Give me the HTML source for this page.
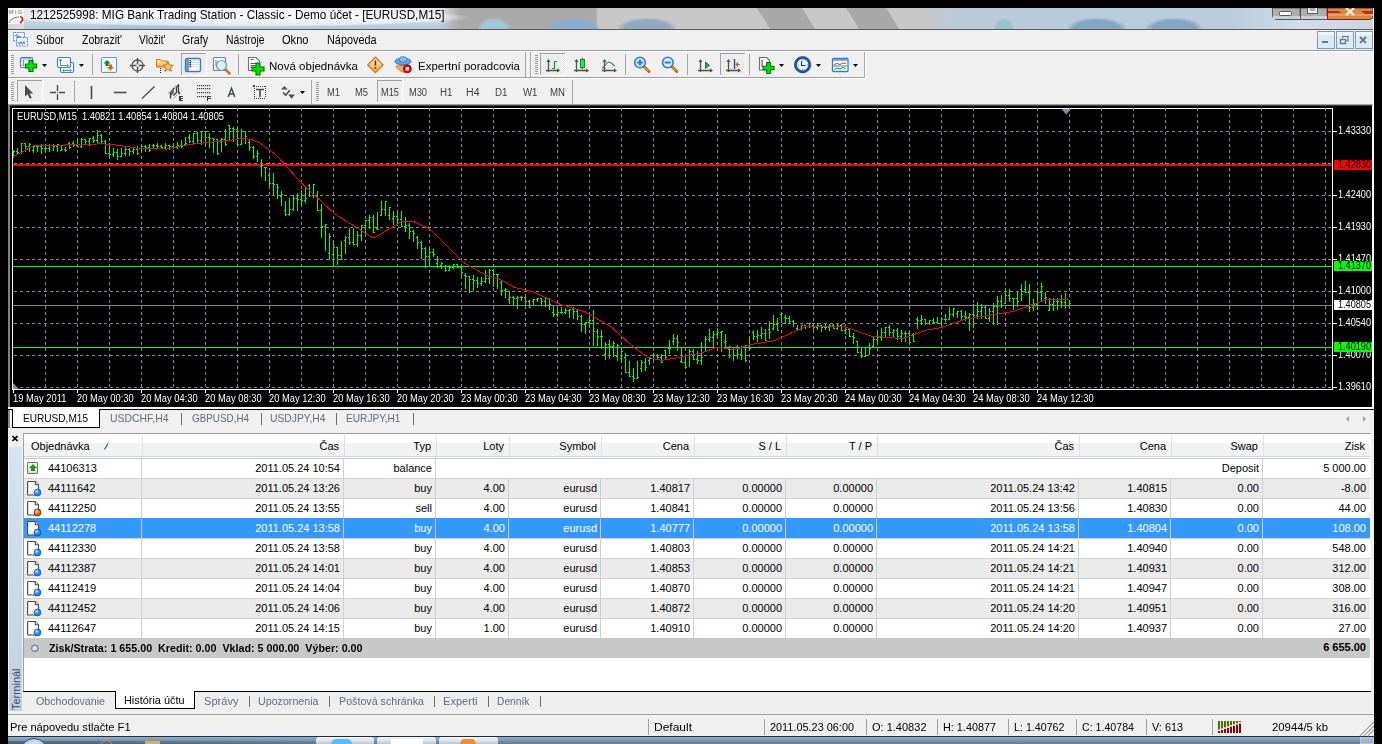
<!DOCTYPE html>
<html><head><meta charset="utf-8"><style>
html,body{margin:0;padding:0;width:1382px;height:744px;overflow:hidden;background:#000;font-family:"Liberation Sans", sans-serif;}
.r{position:absolute;}
.t{position:absolute;white-space:nowrap;font-family:"Liberation Sans", sans-serif;}
</style></head><body>
<div class="r" style="left:8px;top:8px;width:1366px;height:736px;background:#f0f0f0;"></div><div class="r" style="left:8px;top:8px;width:1366px;height:21px;background:linear-gradient(90deg,#d4dde6 0%,#d4dde6 31%,#aaaaaa 32.5%,#aaaaaa 43%,#c8c8c8 43.2%,#c8c8c8 100%);"></div><div class="r" style="left:8px;top:8px;width:452px;height:21px;background:linear-gradient(180deg,#e6eaee 0%,#e2e7ec 45%,#c2d2e2 70%,#b4c8dc 100%);-webkit-mask-image:linear-gradient(90deg,#000 0%,#000 94%,transparent 100%);mask-image:linear-gradient(90deg,#000 0%,#000 94%,transparent 100%);"></div><div class="r" style="left:745px;top:8px;width:60px;height:21px;background:#a9a9a9;transform:skewX(32deg);transform-origin:0 0;left:757px;width:45px;"></div><div class="r" style="left:846px;top:8px;width:40px;height:21px;background:#a9a9a9;transform:skewX(32deg);transform-origin:0 0;"></div><div class="r" style="left:905px;top:8px;width:469px;height:21px;background:linear-gradient(90deg,#c8c8c8 0%,#bccbd9 12%,#b9cbdc 30%,#bccddd 70%,#d2dde7 85%,#c9d7e3 100%);"></div><div class="r" style="left:894px;top:8px;width:30px;height:21px;background:#c8c8c8;transform:skewX(32deg);transform-origin:0 0;"></div><div class="r" style="left:478px;top:18px;width:32px;height:11px;background:radial-gradient(ellipse at 50% 100%,rgba(160,205,225,0.8) 0%,rgba(160,205,225,0.8) 55%,rgba(0,0,0,0) 75%);"></div><div class="r" style="left:548px;top:18px;width:52px;height:11px;background:radial-gradient(ellipse at 50% 100%,rgba(130,175,215,0.8) 0%,rgba(130,175,215,0.8) 55%,rgba(0,0,0,0) 75%);"></div><div class="r" style="left:618px;top:18px;width:58px;height:11px;background:radial-gradient(ellipse at 50% 100%,rgba(130,160,190,0.8) 0%,rgba(130,160,190,0.8) 55%,rgba(0,0,0,0) 75%);"></div><div class="r" style="left:100px;top:18px;width:130px;height:11px;background:radial-gradient(ellipse at 50% 100%,rgba(150,180,210,0.4) 0%,rgba(150,180,210,0.4) 55%,rgba(0,0,0,0) 75%);"></div><div class="r" style="left:1068px;top:18px;width:58px;height:11px;background:radial-gradient(ellipse at 50% 100%,rgba(110,150,180,0.7) 0%,rgba(110,150,180,0.7) 55%,rgba(0,0,0,0) 75%);"></div><div class="r" style="left:1146px;top:18px;width:56px;height:11px;background:radial-gradient(ellipse at 50% 100%,rgba(110,150,180,0.7) 0%,rgba(110,150,180,0.7) 55%,rgba(0,0,0,0) 75%);"></div><div class="r" style="left:994px;top:18px;width:20px;height:11px;background:radial-gradient(ellipse at 50% 100%,rgba(120,190,180,0.5) 0%,rgba(120,190,180,0.5) 55%,rgba(0,0,0,0) 75%);"></div><div class="r" style="left:10px;top:8px;width:462px;height:19px;background:radial-gradient(ellipse closest-side at 50% 50%,rgba(255,255,255,0.75) 0%,rgba(255,255,255,0.6) 85%,rgba(255,255,255,0) 100%);"></div><div class="t" style="left:29.5px;top:7.54px;font-size:13px;line-height:14.52px;color:#000;transform:scaleX(0.9034);transform-origin:0 0;">1212525998: MIG Bank Trading Station - Classic - Demo účet - [EURUSD,M15]</div><div class="r" style="left:8px;top:29px;width:1366px;height:1px;background:#5b5b5b;"></div><div class="r" style="left:8px;top:8px;width:16px;height:16px;background:#fbfbfb;"></div><div class="r" style="left:8px;top:24px;width:16px;height:5px;background:linear-gradient(90deg,#d4d4d4,#dcdcdc);"></div><svg class="r" style="left:8px;top:8px" width="17" height="16"><text x="0.5" y="6.3" font-family="Liberation Sans" font-size="6" letter-spacing="1.2" fill="#6a6a6a">MIG</text><path d="M1 15c2-4 6-6 10-6" stroke="#607080" stroke-width="1" fill="none"/><path d="M12 8.5c3 1 4 4 0 6.5" stroke="#ff1010" stroke-width="1.8" fill="none"/></svg><svg class="r" style="left:1271px;top:8px" width="103" height="13"><path d="M1.5 0V7.5a4 4 0 0 0 4 4H29V0z" fill="#aeaeae" stroke="#585858" stroke-width="1"/><rect x="2" y="8" width="27" height="3" fill="#c4d0dc"/><path d="M29.5 0V11.5H56V0z" fill="#aeaeae" stroke="#585858" stroke-width="1"/><rect x="30" y="8" width="26" height="3" fill="#c4d0dc"/><path d="M56.5 0V11.5H98a4 4 0 0 0 4-4V0z" fill="#d98a3c" stroke="#8a1a20" stroke-width="1"/><path d="M57 3h10l4 2h-14zM90 3h12v3h-8z" fill="#b03030"/><rect x="57" y="6" width="45" height="2" fill="#eaa050"/><rect x="8.5" y="3.5" width="12" height="4" rx="1" fill="#fafafa" stroke="#505860" stroke-width="1"/><path d="M36.5 0V5.5H46.5V0" fill="#fafafa" stroke="#505860" stroke-width="1"/><rect x="38.5" y="0" width="6" height="3" fill="#aeaeae"/><path d="M75 0l4 3.5 4-3.5M75 7l4-3.5 4 3.5" stroke="#f4f4f4" stroke-width="2.2" fill="none"/></svg><div class="r" style="left:8px;top:30px;width:1366px;height:20px;background:#f0f0f0;"></div><div class="r" style="left:8px;top:50px;width:1366px;height:1px;background:#a0a0a0;"></div><div class="r" style="left:8px;top:51px;width:1366px;height:1px;background:#ffffff;"></div><svg class="r" style="left:12px;top:31px" width="17" height="17"><rect x="1.5" y="1.5" width="11" height="8.5" fill="#f4f8ff" stroke="#2f7cf0" stroke-width="1" stroke-dasharray="1 0.6"/><rect x="4.5" y="6.5" width="11" height="8.5" fill="#f4f8ff" stroke="#2f7cf0" stroke-width="1" stroke-dasharray="1 0.6"/><path d="M3 5l2-1.5v3l2-1.5 2 1.5M6 11l1.5 2.5 1.5-3 1.5 3 1.5-3 1 2.5" stroke="#2f7cf0" stroke-width="1" fill="none"/></svg><div class="r" style="left:1317px;top:31px;width:18px;height:18px;box-sizing:border-box;border:1px solid #8898a8;background:linear-gradient(180deg,#eef5fc 0%,#eef5fc 20%,#dce9f7 21%,#dce9f7 100%)"></div><div class="r" style="left:1336px;top:31px;width:18px;height:18px;box-sizing:border-box;border:1px solid #8898a8;background:linear-gradient(180deg,#eef5fc 0%,#eef5fc 20%,#dce9f7 21%,#dce9f7 100%)"></div><div class="r" style="left:1355px;top:31px;width:18px;height:18px;box-sizing:border-box;border:1px solid #8898a8;background:linear-gradient(180deg,#eef5fc 0%,#eef5fc 20%,#dce9f7 21%,#dce9f7 100%)"></div><svg class="r" style="left:1317px;top:31px" width="56" height="18"><rect x="5" y="10" width="6" height="2" fill="#6a7886"/><rect x="23.5" y="8.5" width="5" height="4" fill="none" stroke="#6a7886" stroke-width="1.4"/><path d="M25.5 7V5.5h5.5v4.5h-1.5" fill="none" stroke="#6a7886" stroke-width="1.2"/><path d="M43 6l6 6M49 6l-6 6" stroke="#6a7886" stroke-width="1.8"/></svg><div class="t" style="left:36px;top:33.54px;font-size:12px;line-height:13.40px;color:#000;transform:scaleX(0.8744);transform-origin:0 0;">Súbor</div><div class="t" style="left:82px;top:33.54px;font-size:12px;line-height:13.40px;color:#000;transform:scaleX(0.8764);transform-origin:0 0;">Zobrazit&#x27;</div><div class="t" style="left:139px;top:33.54px;font-size:12px;line-height:13.40px;color:#000;transform:scaleX(0.8377);transform-origin:0 0;">Vložit&#x27;</div><div class="t" style="left:182px;top:33.54px;font-size:12px;line-height:13.40px;color:#000;transform:scaleX(0.8862);transform-origin:0 0;">Grafy</div><div class="t" style="left:226px;top:33.54px;font-size:12px;line-height:13.40px;color:#000;transform:scaleX(0.8616);transform-origin:0 0;">Nástroje</div><div class="t" style="left:282px;top:33.54px;font-size:12px;line-height:13.40px;color:#000;transform:scaleX(0.9239);transform-origin:0 0;">Okno</div><div class="t" style="left:327px;top:33.54px;font-size:12px;line-height:13.40px;color:#000;transform:scaleX(0.9048);transform-origin:0 0;">Nápoveda</div><div class="r" style="left:8px;top:77px;width:857px;height:1px;background:#a0a0a0;"></div><div class="r" style="left:8px;top:78px;width:858px;height:1px;background:#ffffff;"></div><div class="r" style="left:865px;top:52px;width:1px;height:26px;background:#ffffff;"></div><svg class="r" style="left:0;top:0" width="1382" height="110" viewBox="0 0 1382 110"><defs><pattern id="chk" width="2" height="2" patternUnits="userSpaceOnUse"><rect width="2" height="2" fill="#f6f6f6"/><rect width="1" height="1" fill="#e4e4e4"/><rect x="1" y="1" width="1" height="1" fill="#e4e4e4"/></pattern><linearGradient id="gw" x1="0" y1="0" x2="0" y2="1"><stop offset="0" stop-color="#fff"/><stop offset="1" stop-color="#e8eef6"/></linearGradient><linearGradient id="gorange" x1="0" y1="0" x2="0" y2="1"><stop offset="0" stop-color="#fff4c0"/><stop offset="1" stop-color="#f5a040"/></linearGradient><radialGradient id="gclock" cx="0.4" cy="0.35" r="0.7"><stop offset="0" stop-color="#ffffff"/><stop offset="1" stop-color="#dfe8f0"/></radialGradient></defs><rect x="11" y="55" width="3" height="1" fill="#9a9a9a"/><rect x="11" y="57" width="3" height="1" fill="#9a9a9a"/><rect x="11" y="59" width="3" height="1" fill="#9a9a9a"/><rect x="11" y="61" width="3" height="1" fill="#9a9a9a"/><rect x="11" y="63" width="3" height="1" fill="#9a9a9a"/><rect x="11" y="65" width="3" height="1" fill="#9a9a9a"/><rect x="11" y="67" width="3" height="1" fill="#9a9a9a"/><rect x="11" y="69" width="3" height="1" fill="#9a9a9a"/><rect x="11" y="71" width="3" height="1" fill="#9a9a9a"/><rect x="11" y="73" width="3" height="1" fill="#9a9a9a"/><rect x="20.5" y="57.5" width="12" height="10" rx="1.5" fill="#fff" stroke="#3c7fd0" stroke-width="1.2"/><rect x="21" y="58" width="11" height="1.5" fill="#8fbbe8"/><path d="M23.5 60v6M22 61.5l1.5-1.5 1.5 1.5M22 64.5l1.5 1.5 1.5-1.5" stroke="#7a95b0" stroke-width="1" fill="none"/><path d="M29.0 60.5h4v3.5h3.5v4h-3.5v3.5h-4v-3.5h-3.5v-4h3.5z" fill="#00e800" stroke="#007000" stroke-width="1.1"/><path d="M42 64h5l-2.5 3z" fill="#000"/><rect x="60.5" y="62.5" width="13" height="10" rx="1.5" fill="#fff" stroke="#3c7fd0" stroke-width="1.2"/><rect x="57.5" y="57.5" width="13" height="10" rx="1.5" fill="#fff" stroke="#3c7fd0" stroke-width="1.2"/><path d="M60.5 59.5v6M60.5 65.5h8M63 70.5h8" stroke="#6a88a8" stroke-width="1" fill="none"/><path d="M59 61l1.5-2 1.5 2M66.5 64l2 1.5-2 1.5M64.5 69l-2 1.5 2 1.5M69.5 69l2 1.5-2 1.5" stroke="#6a88a8" stroke-width="1" fill="none"/><path d="M79 64h5l-2.5 3z" fill="#000"/><rect x="92" y="54" width="1" height="21" fill="#a8a8a8"/><rect x="101.5" y="57.5" width="15" height="15" rx="1.5" fill="#fff" stroke="#5b9bd5" stroke-width="1.2"/><path d="M104 62h10M104 65h10M104 68h10M104 71h10" stroke="#d8d8d8" stroke-width="1"/><path d="M107 60l-3.5 3.5h2v2.5h3v-2.5h2z" fill="#0a8a20"/><path d="M110.5 70.5l3.5-3.5h-2v-2.5h-3v2.5h-2z" fill="#d06a10"/><circle cx="137.5" cy="65.5" r="5.5" fill="none" stroke="#505050" stroke-width="1.3"/><path d="M137.5 58v15M130 65.5h15" stroke="#505050" stroke-width="1.5"/><circle cx="137.5" cy="65.5" r="1.3" fill="#f0f0f0"/><path d="M156.5 59.5h4l1 1.5h5.5v6h-10.5z" fill="url(#gorange)" stroke="#c87820" stroke-width="1"/><path d="M168 61.5l1.6 3.4 3.6.4-2.7 2.4.8 3.6-3.3-1.9-3.3 1.9.8-3.6-2.7-2.4 3.6-.4z" fill="#f8c060" stroke="#c87018" stroke-width="1"/><path d="M160.5 68v1M160.5 70v1M160.5 72v1" stroke="#222" stroke-width="1"/><rect x="181" y="53" width="25" height="22" fill="url(#chk)"/><rect x="181" y="53" width="25" height="1" fill="#a0a0a0"/><rect x="181" y="53" width="1" height="22" fill="#a0a0a0"/><rect x="181" y="75" width="26" height="1" fill="#ffffff"/><rect x="206" y="53" width="1" height="22" fill="#ffffff"/><rect x="185.5" y="58.5" width="15" height="13" rx="1.5" fill="#fff" stroke="#3a7bd0" stroke-width="1.4"/><rect x="186" y="59" width="3" height="12" fill="#5d9ad8"/><path d="M190 60.5h10M190 62.5h10M190 64.5h10M190 66.5h10" stroke="#c8dcf0" stroke-width="1"/><rect x="189.5" y="60" width="1.5" height="1.5" fill="#e00"/><rect x="189.5" y="62" width="1.5" height="1.5" fill="#024"/><rect x="189.5" y="64" width="1.5" height="1.5" fill="#024"/><rect x="189.5" y="66" width="1.5" height="1.5" fill="#e00"/><rect x="213.5" y="57.5" width="12" height="13" rx="1" fill="#fff" stroke="#808080" stroke-width="1.2"/><path d="M216 60v6M222 60v6" stroke="#8a6a6a" stroke-width="1"/><line x1="225" y1="69" x2="229.5" y2="73.5" stroke="#c07818" stroke-width="2.5" stroke-linecap="round"/><circle cx="221.5" cy="65.5" r="5" fill="#e6f2fc" fill-opacity="0.9" stroke="#5a9ae0" stroke-width="1.2"/><rect x="238" y="54" width="1" height="21" fill="#a8a8a8"/><path d="M248.5 57.5h7.5l3.5 3.5v9.5h-11z" fill="#fff" stroke="#6a7480" stroke-width="1.1"/><path d="M250.5 59.5h3M250.5 63.5h6M250.5 65.5h5M250.5 67.5h3" stroke="#50607a" stroke-width="1"/><path d="M256.0 63.0h4v4.0h4.0v4h-4.0v4.0h-4v-4.0h-4.0v-4h4.0z" fill="#00e800" stroke="#007000" stroke-width="1.1"/><path d="M375.4 57.2l7.6 7.7-7.6 7.7-7.6-7.7z" fill="url(#gorange)" stroke="#d07414" stroke-width="1.3"/><path d="M375.4 60.5v5" stroke="#802000" stroke-width="1.6"/><rect x="374.6" y="67" width="1.6" height="1.6" fill="#802000"/><path d="M396 66c1 3 5 6 10 7l4-4-1-4z" fill="#f5a850" stroke="#c87020" stroke-width="0.8"/><ellipse cx="403" cy="61.5" rx="8" ry="3.3" fill="#60a8e0" stroke="#2a74c0" stroke-width="1"/><ellipse cx="403" cy="59.5" rx="4" ry="2.8" fill="#80c0f0" stroke="#2a74c0" stroke-width="0.8"/><circle cx="407.3" cy="68.8" r="4" fill="#ee0000" stroke="#900" stroke-width="0.8"/><rect x="405.6" y="67.1" width="3.4" height="3.4" fill="#fff"/><rect x="525" y="52" width="1" height="25" fill="#a8a8a8"/><rect x="530" y="52" width="1" height="25" fill="#a8a8a8"/><rect x="535" y="55" width="3" height="1" fill="#9a9a9a"/><rect x="535" y="57" width="3" height="1" fill="#9a9a9a"/><rect x="535" y="59" width="3" height="1" fill="#9a9a9a"/><rect x="535" y="61" width="3" height="1" fill="#9a9a9a"/><rect x="535" y="63" width="3" height="1" fill="#9a9a9a"/><rect x="535" y="65" width="3" height="1" fill="#9a9a9a"/><rect x="535" y="67" width="3" height="1" fill="#9a9a9a"/><rect x="535" y="69" width="3" height="1" fill="#9a9a9a"/><rect x="535" y="71" width="3" height="1" fill="#9a9a9a"/><rect x="535" y="73" width="3" height="1" fill="#9a9a9a"/><rect x="540" y="53" width="25" height="22" fill="url(#chk)"/><rect x="540" y="53" width="25" height="1" fill="#a0a0a0"/><rect x="540" y="53" width="1" height="22" fill="#a0a0a0"/><rect x="540" y="75" width="26" height="1" fill="#ffffff"/><rect x="565" y="53" width="1" height="22" fill="#ffffff"/><path d="M548.5 60V72M546 70.5H559" stroke="#505050" stroke-width="1.3" fill="none"/><path d="M548.5 59l-2 3h4z" fill="#505050"/><path d="M560 70.5l-3 -2v4z" fill="#505050"/><path d="M554.5 61v8M552 68.5h2.5M554.5 61.5h2.5" stroke="#0a9a20" stroke-width="1.2" fill="none"/><path d="M576.5 60V72M574 70.5H588" stroke="#505050" stroke-width="1.3" fill="none"/><path d="M576.5 59l-2 3h4z" fill="#505050"/><path d="M589 70.5l-3 -2v4z" fill="#505050"/><path d="M582.5 57.5v12" stroke="#0a8a20" stroke-width="1"/><rect x="580.5" y="59.5" width="4" height="8" fill="#20ee30" stroke="#0a8a20" stroke-width="1"/><path d="M604.5 60V72M602 70.5H616" stroke="#505050" stroke-width="1.3" fill="none"/><path d="M604.5 59l-2 3h4z" fill="#505050"/><path d="M617 70.5l-3 -2v4z" fill="#505050"/><path d="M602.5 68.5c2-3 4-6 6.5-6.5 2 0 4 3 6 4" stroke="#208a30" stroke-width="1.2" fill="none"/><rect x="625" y="54" width="1" height="21" fill="#a8a8a8"/><line x1="643.5" y1="66.0" x2="649" y2="71.5" stroke="#b86d10" stroke-width="3" stroke-linecap="round"/><line x1="644.5" y1="67.0" x2="648.5" y2="71.0" stroke="#f0b040" stroke-width="1"/><circle cx="640" cy="62.5" r="5.3" fill="#d8ecfb" stroke="#2f7ad0" stroke-width="1.6"/><path d="M637 62.5h6M640 59.5v6" stroke="#2f7ad0" stroke-width="2"/><line x1="671.3" y1="66.0" x2="676.8" y2="71.5" stroke="#b86d10" stroke-width="3" stroke-linecap="round"/><line x1="672.3" y1="67.0" x2="676.3" y2="71.0" stroke="#f0b040" stroke-width="1"/><circle cx="667.8" cy="62.5" r="5.3" fill="#d8ecfb" stroke="#2f7ad0" stroke-width="1.6"/><path d="M664.8 62.5h6" stroke="#2f7ad0" stroke-width="2"/><rect x="687" y="54" width="1" height="21" fill="#a8a8a8"/><path d="M700.5 60V72M698 70.5H712" stroke="#505050" stroke-width="1.3" fill="none"/><path d="M700.5 59l-2 3h4z" fill="#505050"/><path d="M713 70.5l-3 -2v4z" fill="#505050"/><path d="M705.5 62v6.5l4-3.2z" fill="#20b030" stroke="#0a8a20" stroke-width="1"/><rect x="720" y="53" width="25" height="22" fill="url(#chk)"/><rect x="720" y="53" width="25" height="1" fill="#a0a0a0"/><rect x="720" y="53" width="1" height="22" fill="#a0a0a0"/><rect x="720" y="75" width="26" height="1" fill="#ffffff"/><rect x="745" y="53" width="1" height="22" fill="#ffffff"/><path d="M728.5 60V72M726 70.5H740" stroke="#505050" stroke-width="1.3" fill="none"/><path d="M728.5 59l-2 3h4z" fill="#505050"/><path d="M741 70.5l-3 -2v4z" fill="#505050"/><path d="M734.5 59v10" stroke="#1a5ab0" stroke-width="1.4"/><path d="M736 64.5h4M738 62.5l-2 2 2 2" stroke="#d06010" stroke-width="1.2" fill="none"/><rect x="749" y="54" width="1" height="21" fill="#a8a8a8"/><path d="M759.5 57.5h7l3 3v9.5h-10z" fill="#fff" stroke="#707070" stroke-width="1.1"/><path d="M762 60v7" stroke="#702070" stroke-width="1"/><path d="M766.7 62.5h3.6v3.7h3.7v3.6h-3.7v3.7h-3.6v-3.7h-3.7v-3.6h3.7z" fill="#00e800" stroke="#007000" stroke-width="1.1"/><path d="M779 64h5l-2.5 3z" fill="#000"/><circle cx="802.6" cy="64.7" r="7" fill="url(#gclock)" stroke="#1d56b8" stroke-width="2.6"/><circle cx="802.6" cy="64.7" r="8.2" fill="none" stroke="#0d2f80" stroke-width="0.6"/><path d="M802.6 59.5v1M802.6 69v1M797.5 64.7h1M806.8 64.7h1" stroke="#607080" stroke-width="0.8"/><path d="M801.5 61v4.5h4" stroke="#303030" stroke-width="1.2" fill="none"/><path d="M816 64h5l-2.5 3z" fill="#000"/><rect x="832.5" y="58.5" width="15.5" height="13" rx="1" fill="#fff" stroke="#3a7bd0" stroke-width="1.3"/><rect x="833" y="59" width="14.5" height="1.8" fill="#6aa0e0"/><path d="M834 64.5l3-1 3 1 3-1.5 3 .5" stroke="#b05010" stroke-width="1" fill="none"/><path d="M833 66h14" stroke="#3a7bd0" stroke-width="1"/><path d="M834 69.5l3-1.5 3 1 3-1.5 3 1" stroke="#20a030" stroke-width="1" fill="none"/><path d="M853 64h5l-2.5 3z" fill="#000"/><rect x="864" y="52" width="1" height="25" fill="#a8a8a8"/><rect x="11" y="82" width="3" height="1" fill="#9a9a9a"/><rect x="11" y="84" width="3" height="1" fill="#9a9a9a"/><rect x="11" y="86" width="3" height="1" fill="#9a9a9a"/><rect x="11" y="88" width="3" height="1" fill="#9a9a9a"/><rect x="11" y="90" width="3" height="1" fill="#9a9a9a"/><rect x="11" y="92" width="3" height="1" fill="#9a9a9a"/><rect x="11" y="94" width="3" height="1" fill="#9a9a9a"/><rect x="11" y="96" width="3" height="1" fill="#9a9a9a"/><rect x="11" y="98" width="3" height="1" fill="#9a9a9a"/><rect x="11" y="100" width="3" height="1" fill="#9a9a9a"/><rect x="17" y="80" width="25" height="22" fill="url(#chk)"/><rect x="17" y="80" width="25" height="1" fill="#a0a0a0"/><rect x="17" y="80" width="1" height="22" fill="#a0a0a0"/><rect x="17" y="102" width="26" height="1" fill="#ffffff"/><rect x="42" y="80" width="1" height="22" fill="#ffffff"/><path d="M25 85v11.5l2.6-2.3 2.2 4.6 2-1-2.2-4.4h3.6z" fill="#4a4a4a"/><path d="M50 92.5h6M59 92.5h6M57.5 85v6M57.5 94v6" stroke="#4a4a4a" stroke-width="1.4"/><rect x="57" y="92" width="1" height="1" fill="#c03030"/><rect x="74" y="81" width="1" height="21" fill="#a8a8a8"/><path d="M91.5 86v13" stroke="#4a4a4a" stroke-width="1.6"/><path d="M114 92.5h12.5" stroke="#4a4a4a" stroke-width="1.6"/><path d="M142 98.5l12.5-12" stroke="#4a4a4a" stroke-width="1.2"/><path d="M168 93.5L176 86M173.5 98.5L182 90.5" stroke="#5a7890" stroke-width="1" stroke-dasharray="1 1" fill="none"/><path d="M170.5 98.5V92.5L172 91M170 95.5l3-2.5V89.5l1.5-1.5M173.5 95.5l3-3V87l2.5-2.5M178.5 84v8.5l1.5 1.5" stroke="#3a3a3a" stroke-width="1.3" fill="none"/><path d="M179.5 96.5h3.5M179.5 98.5h3M179.5 100.5h3.5M180 96v5" stroke="#3a3a3a" stroke-width="1.1" fill="none" shape-rendering="crispEdges"/><rect x="197" y="85" width="1.2" height="1.2" fill="#3a3a3a"/><rect x="199" y="85" width="1.2" height="1.2" fill="#3a3a3a"/><rect x="201" y="85" width="1.2" height="1.2" fill="#3a3a3a"/><rect x="203" y="85" width="1.2" height="1.2" fill="#3a3a3a"/><rect x="205" y="85" width="1.2" height="1.2" fill="#3a3a3a"/><rect x="207" y="85" width="1.2" height="1.2" fill="#3a3a3a"/><rect x="209" y="85" width="1.2" height="1.2" fill="#3a3a3a"/><rect x="197" y="88" width="1.2" height="1.2" fill="#3a3a3a"/><rect x="199" y="88" width="1.2" height="1.2" fill="#3a3a3a"/><rect x="201" y="88" width="1.2" height="1.2" fill="#3a3a3a"/><rect x="203" y="88" width="1.2" height="1.2" fill="#3a3a3a"/><rect x="205" y="88" width="1.2" height="1.2" fill="#3a3a3a"/><rect x="207" y="88" width="1.2" height="1.2" fill="#3a3a3a"/><rect x="209" y="88" width="1.2" height="1.2" fill="#3a3a3a"/><rect x="197" y="92" width="1.2" height="1.2" fill="#3a3a3a"/><rect x="199" y="92" width="1.2" height="1.2" fill="#3a3a3a"/><rect x="201" y="92" width="1.2" height="1.2" fill="#3a3a3a"/><rect x="203" y="92" width="1.2" height="1.2" fill="#3a3a3a"/><rect x="205" y="92" width="1.2" height="1.2" fill="#3a3a3a"/><rect x="207" y="92" width="1.2" height="1.2" fill="#3a3a3a"/><rect x="209" y="92" width="1.2" height="1.2" fill="#3a3a3a"/><rect x="197" y="96" width="1.2" height="1.2" fill="#3a3a3a"/><rect x="199" y="96" width="1.2" height="1.2" fill="#3a3a3a"/><rect x="201" y="96" width="1.2" height="1.2" fill="#3a3a3a"/><rect x="203" y="96" width="1.2" height="1.2" fill="#3a3a3a"/><rect x="205" y="96" width="1.2" height="1.2" fill="#3a3a3a"/><path d="M207.5 96.5h3.5M207.5 98.5h3M207.5 96v5" stroke="#3a3a3a" stroke-width="1.2" fill="none" shape-rendering="crispEdges"/><path d="M228.2 97L231.5 88.3 234.8 97M229.6 94h3.8" stroke="#404850" stroke-width="1.4" fill="none"/><rect x="254" y="86" width="1" height="1" fill="#3a3a3a"/><rect x="254" y="98" width="1" height="1" fill="#3a3a3a"/><rect x="256" y="86" width="1" height="1" fill="#3a3a3a"/><rect x="256" y="98" width="1" height="1" fill="#3a3a3a"/><rect x="258" y="86" width="1" height="1" fill="#3a3a3a"/><rect x="258" y="98" width="1" height="1" fill="#3a3a3a"/><rect x="260" y="86" width="1" height="1" fill="#3a3a3a"/><rect x="260" y="98" width="1" height="1" fill="#3a3a3a"/><rect x="262" y="86" width="1" height="1" fill="#3a3a3a"/><rect x="262" y="98" width="1" height="1" fill="#3a3a3a"/><rect x="264" y="86" width="1" height="1" fill="#3a3a3a"/><rect x="264" y="98" width="1" height="1" fill="#3a3a3a"/><rect x="254" y="86" width="1" height="1" fill="#3a3a3a"/><rect x="265" y="86" width="1" height="1" fill="#3a3a3a"/><rect x="254" y="88" width="1" height="1" fill="#3a3a3a"/><rect x="265" y="88" width="1" height="1" fill="#3a3a3a"/><rect x="254" y="90" width="1" height="1" fill="#3a3a3a"/><rect x="265" y="90" width="1" height="1" fill="#3a3a3a"/><rect x="254" y="92" width="1" height="1" fill="#3a3a3a"/><rect x="265" y="92" width="1" height="1" fill="#3a3a3a"/><rect x="254" y="94" width="1" height="1" fill="#3a3a3a"/><rect x="265" y="94" width="1" height="1" fill="#3a3a3a"/><rect x="254" y="96" width="1" height="1" fill="#3a3a3a"/><rect x="265" y="96" width="1" height="1" fill="#3a3a3a"/><rect x="253" y="85" width="2" height="2" fill="#3a3a3a"/><path d="M256 89.5h8M260 89.5v7.5" stroke="#505050" stroke-width="1.7" fill="none"/><path d="M281 89.5l3.4-3.5 3.4 3.5z M288.2 94.5h6.8l-3.4 4.3z" fill="#505050"/><path d="M283 92.5l2.7 2.8 4-5" stroke="#404040" stroke-width="1.4" fill="none"/><path d="M300 91h5l-2.5 3z" fill="#000"/><rect x="311" y="80" width="1" height="24" fill="#a8a8a8"/><rect x="316" y="82" width="3" height="1" fill="#9a9a9a"/><rect x="316" y="84" width="3" height="1" fill="#9a9a9a"/><rect x="316" y="86" width="3" height="1" fill="#9a9a9a"/><rect x="316" y="88" width="3" height="1" fill="#9a9a9a"/><rect x="316" y="90" width="3" height="1" fill="#9a9a9a"/><rect x="316" y="92" width="3" height="1" fill="#9a9a9a"/><rect x="316" y="94" width="3" height="1" fill="#9a9a9a"/><rect x="316" y="96" width="3" height="1" fill="#9a9a9a"/><rect x="316" y="98" width="3" height="1" fill="#9a9a9a"/><rect x="316" y="100" width="3" height="1" fill="#9a9a9a"/><rect x="377" y="80" width="25" height="22" fill="url(#chk)"/><rect x="377" y="80" width="25" height="1" fill="#a0a0a0"/><rect x="377" y="80" width="1" height="22" fill="#a0a0a0"/><rect x="377" y="102" width="26" height="1" fill="#ffffff"/><rect x="402" y="80" width="1" height="22" fill="#ffffff"/><rect x="572" y="80" width="1" height="24" fill="#a8a8a8"/></svg><div class="t" style="left:269px;top:59.59px;font-size:11.5px;line-height:12.85px;color:#000;transform:scaleX(1.0015);transform-origin:0 0;">Nová objednávka</div><div class="t" style="left:418px;top:59.59px;font-size:11.5px;line-height:12.85px;color:#000;transform:scaleX(0.9972);transform-origin:0 0;">Expertní poradcovia</div><div class="t" style="left:326.5px;top:86.95px;font-size:10px;line-height:11.17px;color:#404040;transform:scaleX(0.9358);transform-origin:0 0;">M1</div><div class="t" style="left:354.5px;top:86.95px;font-size:10px;line-height:11.17px;color:#404040;transform:scaleX(0.9358);transform-origin:0 0;">M5</div><div class="t" style="left:380.5px;top:86.95px;font-size:10px;line-height:11.17px;color:#404040;transform:scaleX(0.9253);transform-origin:0 0;">M15</div><div class="t" style="left:408.5px;top:86.95px;font-size:10px;line-height:11.17px;color:#404040;transform:scaleX(0.9253);transform-origin:0 0;">M30</div><div class="t" style="left:439.5px;top:86.95px;font-size:10px;line-height:11.17px;color:#404040;transform:scaleX(0.9778);transform-origin:0 0;">H1</div><div class="t" style="left:466px;top:86.95px;font-size:10px;line-height:11.17px;color:#404040;transform:scaleX(1.0561);transform-origin:0 0;">H4</div><div class="t" style="left:495px;top:86.95px;font-size:10px;line-height:11.17px;color:#404040;transform:scaleX(0.9778);transform-origin:0 0;">D1</div><div class="t" style="left:523px;top:86.95px;font-size:10px;line-height:11.17px;color:#404040;transform:scaleX(0.9667);transform-origin:0 0;">W1</div><div class="t" style="left:549.5px;top:86.95px;font-size:10px;line-height:11.17px;color:#404040;transform:scaleX(0.9645);transform-origin:0 0;">MN</div><div class="r" style="left:8px;top:104px;width:1366px;height:304px;background:#000;"></div><div class="r" style="left:8px;top:104px;width:1366px;height:1px;background:#a0a0a0;"></div><div class="r" style="left:8px;top:105px;width:1366px;height:1px;background:#404040;"></div><div class="r" style="left:8px;top:105px;width:2px;height:302px;background:#808080;"></div><div class="r" style="left:1372px;top:105px;width:1px;height:302px;background:#ffffff;"></div><div class="r" style="left:1373px;top:8px;width:1px;height:736px;background:#ffffff;"></div><div class="r" style="left:12px;top:108px;width:1321px;height:1px;background:#fff;"></div><div class="r" style="left:12px;top:108px;width:1px;height:282px;background:#fff;"></div><div class="r" style="left:1332px;top:108px;width:1px;height:282px;background:#fff;"></div><div class="r" style="left:12px;top:389px;width:1321px;height:1px;background:#fff;"></div><svg class="r" style="left:0;top:0" width="1382" height="744" viewBox="0 0 1382 744"><path d="M45.5 108V389 M77.5 108V389 M109.5 108V389 M141.5 108V389 M173.5 108V389 M205.5 108V389 M237.5 108V389 M269.5 108V389 M301.5 108V389 M333.5 108V389 M365.5 108V389 M397.5 108V389 M429.5 108V389 M461.5 108V389 M493.5 108V389 M525.5 108V389 M557.5 108V389 M589.5 108V389 M621.5 108V389 M653.5 108V389 M685.5 108V389 M717.5 108V389 M749.5 108V389 M781.5 108V389 M813.5 108V389 M845.5 108V389 M877.5 108V389 M909.5 108V389 M941.5 108V389 M973.5 108V389 M1005.5 108V389 M1037.5 108V389 M1069.5 108V389 M1101.5 108V389 M1133.5 108V389 M1165.5 108V389 M1197.5 108V389 M1229.5 108V389 M1261.5 108V389 M1293.5 108V389 M1325.5 108V389 M14 131.5H1332 M14 163.5H1332 M14 195.5H1332 M14 227.5H1332 M14 259.5H1332 M14 291.5H1332 M14 323.5H1332 M14 355.5H1332 M14 387.5H1332" stroke="#7d8ea0" stroke-width="1" stroke-dasharray="3 3" fill="none"/><rect x="13" y="164" width="1319" height="2" fill="#ff0000"/><rect x="13" y="266" width="1319" height="1" fill="#00ff00"/><rect x="13" y="347" width="1319" height="1" fill="#00ff00"/><rect x="13" y="305" width="1319" height="1" fill="#778899"/><path d="M13.5 150V158M12 150.5h1M14 151.5h1M17.5 148V154M16 151.5h1M18 152.5h1M21.5 143V154M20 152.5h1M22 143.5h1M25.5 143V152M24 143.5h1M26 146.5h1M29.5 143V152M28 146.5h1M30 144.5h1M33.5 146V153M32 150.5h1M34 146.5h1M37.5 145V152M36 146.5h1M38 146.5h1M41.5 144V154M40 146.5h1M42 148.5h1M45.5 144V152M44 148.5h1M46 148.5h1M49.5 144V152M48 148.5h1M50 145.5h1M53.5 144V151M52 145.5h1M54 146.5h1M57.5 144V152M56 146.5h1M58 144.5h1M61.5 146V151M60 150.5h1M62 149.5h1M65.5 147V152M64 149.5h1M66 150.5h1M69.5 142V149M68 143.5h1M70 147.5h1M73.5 141V147M72 143.5h1M74 145.5h1M77.5 139V147M76 145.5h1M78 146.5h1M81.5 138V148M80 146.5h1M82 139.5h1M85.5 139V145M84 139.5h1M86 141.5h1M89.5 138V146M88 141.5h1M90 138.5h1M93.5 136V143M92 138.5h1M94 140.5h1M97.5 130V144M96 140.5h1M98 135.5h1M101.5 134V144M100 135.5h1M102 141.5h1M105.5 140V154M104 141.5h1M106 153.5h1M109.5 143V157M108 153.5h1M110 154.5h1M113.5 148V157M112 154.5h1M114 152.5h1M117.5 149V160M116 152.5h1M118 156.5h1M121.5 148V157M120 156.5h1M122 153.5h1M125.5 147V156M124 153.5h1M126 149.5h1M129.5 148V156M128 149.5h1M130 151.5h1M133.5 148V154M132 151.5h1M134 149.5h1M137.5 146V155M136 149.5h1M138 153.5h1M141.5 144V152M140 148.5h1M142 146.5h1M145.5 145V152M144 146.5h1M146 147.5h1M149.5 144V152M148 147.5h1M150 150.5h1M153.5 144V148M152 145.5h1M154 145.5h1M157.5 143V149M156 145.5h1M158 146.5h1M161.5 145V149M160 146.5h1M162 147.5h1M165.5 143V150M164 147.5h1M166 145.5h1M169.5 145V150M168 145.5h1M170 146.5h1M173.5 143V149M172 146.5h1M174 147.5h1M177.5 142V149M176 147.5h1M178 145.5h1M181.5 140V148M180 145.5h1M182 146.5h1M185.5 137V145M184 144.5h1M186 143.5h1M189.5 134V143M188 137.5h1M190 141.5h1M193.5 133V144M192 141.5h1M194 133.5h1M197.5 132V144M196 133.5h1M198 140.5h1M201.5 131V145M200 140.5h1M202 131.5h1M205.5 131V145M204 131.5h1M206 137.5h1M209.5 133V148M208 137.5h1M210 138.5h1M213.5 138V153M212 138.5h1M214 139.5h1M217.5 139V155M216 139.5h1M218 153.5h1M221.5 138V152M220 140.5h1M222 139.5h1M225.5 129V146M224 139.5h1M226 144.5h1M229.5 125V140M228 125.5h1M230 128.5h1M233.5 127V142M232 128.5h1M234 129.5h1M237.5 128V145M236 129.5h1M238 144.5h1M241.5 129V145M240 144.5h1M242 131.5h1M245.5 131V144M244 131.5h1M246 136.5h1M249.5 139V151M248 142.5h1M250 147.5h1M253.5 146V159M252 147.5h1M254 156.5h1M257.5 150V162M256 156.5h1M258 153.5h1M261.5 159V177M260 166.5h1M262 165.5h1M265.5 167V181M264 167.5h1M266 167.5h1M269.5 172V187M268 175.5h1M270 183.5h1M273.5 173V195M272 183.5h1M274 184.5h1M277.5 184V199M276 184.5h1M278 187.5h1M281.5 191V206M280 196.5h1M282 194.5h1M285.5 201V216M284 210.5h1M286 214.5h1M289.5 198V216M288 214.5h1M290 209.5h1M293.5 195V211M292 209.5h1M294 198.5h1M297.5 193V211M296 198.5h1M298 199.5h1M301.5 190V206M300 199.5h1M302 200.5h1M305.5 186V203M304 200.5h1M306 198.5h1M309.5 184V197M308 185.5h1M310 195.5h1M313.5 184V198M312 195.5h1M314 184.5h1M317.5 191V211M316 195.5h1M318 210.5h1M321.5 204V238M320 210.5h1M322 226.5h1M325.5 224V251M324 226.5h1M326 224.5h1M329.5 233V260M328 253.5h1M330 236.5h1M333.5 241V267M332 254.5h1M334 247.5h1M337.5 247V265M336 247.5h1M338 255.5h1M341.5 241V260M340 255.5h1M342 259.5h1M345.5 236V254M344 240.5h1M346 237.5h1M349.5 228V245M348 237.5h1M350 242.5h1M353.5 228V245M352 242.5h1M354 244.5h1M357.5 231V247M356 244.5h1M358 235.5h1M361.5 225V241M360 235.5h1M362 225.5h1M365.5 220V236M364 225.5h1M366 220.5h1M369.5 215V229M368 220.5h1M370 217.5h1M373.5 215V233M372 217.5h1M374 232.5h1M377.5 212V230M376 228.5h1M378 229.5h1M381.5 201V216M380 215.5h1M382 209.5h1M385.5 201V216M384 209.5h1M386 201.5h1M389.5 207V220M388 215.5h1M390 207.5h1M393.5 211V225M392 218.5h1M394 216.5h1M397.5 211V226M396 216.5h1M398 219.5h1M401.5 211V227M400 219.5h1M402 226.5h1M405.5 217V232M404 226.5h1M406 225.5h1M409.5 223V239M408 225.5h1M410 231.5h1M413.5 230V242M412 231.5h1M414 233.5h1M417.5 236V249M416 237.5h1M418 242.5h1M421.5 241V259M420 242.5h1M422 248.5h1M425.5 247V268M424 248.5h1M426 256.5h1M429.5 248V264M428 256.5h1M430 252.5h1M433.5 249V257M432 252.5h1M434 254.5h1M437.5 256V268M436 263.5h1M438 259.5h1M441.5 262V269M440 265.5h1M442 263.5h1M445.5 265V272M444 266.5h1M446 270.5h1M449.5 265V271M448 270.5h1M450 267.5h1M453.5 264V269M452 267.5h1M454 264.5h1M457.5 264V268M456 264.5h1M458 267.5h1M461.5 267V276M460 267.5h1M462 272.5h1M465.5 273V289M464 275.5h1M466 276.5h1M469.5 276V293M468 276.5h1M470 279.5h1M473.5 275V291M472 279.5h1M474 280.5h1M477.5 277V288M476 280.5h1M478 283.5h1M481.5 277V286M480 283.5h1M482 281.5h1M485.5 270V283M484 281.5h1M486 278.5h1M489.5 269V284M488 278.5h1M490 270.5h1M493.5 269V287M492 270.5h1M494 274.5h1M497.5 274V289M496 274.5h1M498 274.5h1M501.5 281V296M500 282.5h1M502 290.5h1M505.5 288V298M504 290.5h1M506 289.5h1M509.5 291V304M508 299.5h1M510 297.5h1M513.5 296V306M512 297.5h1M514 298.5h1M517.5 296V309M516 298.5h1M518 297.5h1M521.5 296V301M520 297.5h1M522 297.5h1M525.5 297V306M524 297.5h1M526 301.5h1M529.5 300V308M528 301.5h1M530 307.5h1M533.5 299V305M532 301.5h1M534 299.5h1M537.5 298V302M536 299.5h1M538 298.5h1M541.5 298V306M540 298.5h1M542 301.5h1M545.5 298V307M544 301.5h1M546 305.5h1M549.5 298V310M548 305.5h1M550 304.5h1M553.5 306V317M552 312.5h1M554 314.5h1M557.5 309V317M556 314.5h1M558 312.5h1M561.5 307V314M560 312.5h1M562 312.5h1M565.5 308V314M564 312.5h1M566 310.5h1M569.5 309V318M568 310.5h1M570 309.5h1M573.5 307V319M572 309.5h1M574 311.5h1M577.5 310V320M576 311.5h1M578 316.5h1M581.5 315V332M580 316.5h1M582 324.5h1M585.5 322V334M584 324.5h1M586 322.5h1M589.5 313V328M588 322.5h1M590 320.5h1M593.5 310V346M592 320.5h1M594 331.5h1M597.5 329V346M596 331.5h1M598 336.5h1M601.5 330V349M600 336.5h1M602 336.5h1M605.5 342V360M604 354.5h1M606 344.5h1M609.5 340V359M608 344.5h1M610 346.5h1M613.5 341V357M612 346.5h1M614 343.5h1M617.5 344V361M616 356.5h1M618 345.5h1M621.5 348V362M620 358.5h1M622 351.5h1M625.5 353V373M624 357.5h1M626 372.5h1M629.5 361V377M628 372.5h1M630 376.5h1M633.5 368V382M632 376.5h1M634 378.5h1M637.5 361V379M636 378.5h1M638 377.5h1M641.5 360V372M640 368.5h1M642 362.5h1M645.5 358V371M644 362.5h1M646 367.5h1M649.5 357V365M648 360.5h1M650 358.5h1M653.5 353V360M652 358.5h1M654 355.5h1M657.5 354V360M656 355.5h1M658 357.5h1M661.5 354V363M660 357.5h1M662 362.5h1M665.5 350V359M664 350.5h1M666 357.5h1M669.5 340V354M668 348.5h1M670 348.5h1M673.5 334V345M672 341.5h1M674 338.5h1M677.5 335V351M676 338.5h1M678 342.5h1M681.5 347V363M680 361.5h1M682 362.5h1M685.5 357V369M684 362.5h1M686 367.5h1M689.5 349V367M688 355.5h1M690 351.5h1M693.5 349V360M692 351.5h1M694 359.5h1M697.5 351V364M696 359.5h1M698 360.5h1M701.5 342V365M700 360.5h1M702 357.5h1M705.5 336V351M704 347.5h1M706 339.5h1M709.5 329V342M708 339.5h1M710 337.5h1M713.5 331V347M712 337.5h1M714 334.5h1M717.5 328V339M716 334.5h1M718 332.5h1M721.5 331V352M720 332.5h1M722 331.5h1M725.5 334V349M724 342.5h1M726 341.5h1M729.5 346V358M728 349.5h1M730 347.5h1M733.5 347V361M732 347.5h1M734 355.5h1M737.5 345V359M736 355.5h1M738 354.5h1M741.5 346V360M740 354.5h1M742 347.5h1M745.5 345V362M744 347.5h1M746 360.5h1M749.5 338V349M748 345.5h1M750 348.5h1M753.5 330V340M752 332.5h1M754 336.5h1M757.5 330V342M756 336.5h1M758 335.5h1M761.5 327V339M760 335.5h1M762 333.5h1M765.5 329V341M764 333.5h1M766 340.5h1M769.5 321V339M768 329.5h1M770 332.5h1M773.5 315V330M772 328.5h1M774 324.5h1M777.5 318V331M776 324.5h1M778 330.5h1M781.5 313V323M780 314.5h1M782 313.5h1M785.5 315V324M784 317.5h1M786 318.5h1M789.5 316V324M788 318.5h1M790 321.5h1M793.5 320V327M792 321.5h1M794 323.5h1M797.5 325V330M796 328.5h1M798 329.5h1M801.5 325V330M800 329.5h1M802 325.5h1M805.5 325V329M804 325.5h1M806 326.5h1M809.5 323V328M808 326.5h1M810 323.5h1M813.5 324V330M812 325.5h1M814 327.5h1M817.5 323V330M816 327.5h1M818 325.5h1M821.5 325V332M820 325.5h1M822 327.5h1M825.5 324V330M824 327.5h1M826 327.5h1M829.5 324V331M828 327.5h1M830 325.5h1M833.5 324V329M832 325.5h1M834 328.5h1M837.5 324V330M836 328.5h1M838 325.5h1M841.5 324V331M840 325.5h1M842 330.5h1M845.5 326V334M844 330.5h1M846 329.5h1M849.5 328V337M848 329.5h1M850 336.5h1M853.5 333V344M852 336.5h1M854 337.5h1M857.5 341V353M856 341.5h1M858 352.5h1M861.5 348V358M860 352.5h1M862 356.5h1M865.5 347V357M864 356.5h1M866 347.5h1M869.5 343V355M868 347.5h1M870 348.5h1M873.5 336V347M872 346.5h1M874 339.5h1M877.5 331V345M876 339.5h1M878 337.5h1M881.5 328V341M880 337.5h1M882 332.5h1M885.5 327V338M884 332.5h1M886 327.5h1M889.5 325V336M888 327.5h1M890 332.5h1M893.5 329V338M892 332.5h1M894 330.5h1M897.5 328V340M896 330.5h1M898 336.5h1M901.5 330V342M900 336.5h1M902 333.5h1M905.5 331V342M904 333.5h1M906 333.5h1M909.5 332V343M908 333.5h1M910 342.5h1M913.5 333V342M912 334.5h1M914 341.5h1M917.5 317V329M916 319.5h1M918 320.5h1M921.5 315V325M920 320.5h1M922 319.5h1M925.5 319V325M924 319.5h1M926 323.5h1M929.5 320V325M928 323.5h1M930 320.5h1M933.5 318V324M932 320.5h1M934 322.5h1M937.5 317V324M936 322.5h1M938 323.5h1M941.5 317V324M940 323.5h1M942 319.5h1M945.5 314V322M944 319.5h1M946 319.5h1M949.5 307V320M948 319.5h1M950 314.5h1M953.5 308V317M952 314.5h1M954 308.5h1M957.5 311V318M956 313.5h1M958 311.5h1M961.5 310V320M960 311.5h1M962 316.5h1M965.5 311V321M964 316.5h1M966 317.5h1M969.5 313V331M968 317.5h1M970 314.5h1M973.5 304V328M972 314.5h1M974 315.5h1M977.5 302V319M976 315.5h1M978 311.5h1M981.5 304V319M980 311.5h1M982 307.5h1M985.5 306V319M984 307.5h1M986 318.5h1M989.5 308V322M988 318.5h1M990 311.5h1M993.5 303V325M992 311.5h1M994 306.5h1M997.5 296V325M996 306.5h1M998 301.5h1M1001.5 295V308M1000 301.5h1M1002 305.5h1M1005.5 289V304M1004 303.5h1M1006 295.5h1M1009.5 289V302M1008 295.5h1M1010 298.5h1M1013.5 298V310M1012 298.5h1M1014 298.5h1M1017.5 291V307M1016 298.5h1M1018 301.5h1M1021.5 284V301M1020 289.5h1M1022 294.5h1M1025.5 281V293M1024 289.5h1M1026 292.5h1M1029.5 284V312M1028 292.5h1M1030 307.5h1M1033.5 299V311M1032 307.5h1M1034 304.5h1M1037.5 290V310M1036 304.5h1M1038 292.5h1M1041.5 283V301M1040 292.5h1M1042 286.5h1M1045.5 292V304M1044 298.5h1M1046 297.5h1M1049.5 298V311M1048 310.5h1M1050 304.5h1M1053.5 298V311M1052 304.5h1M1054 301.5h1M1057.5 298V310M1056 301.5h1M1058 301.5h1M1061.5 295V308M1060 301.5h1M1062 302.5h1M1065.5 293V308M1064 302.5h1M1066 305.5h1M1069.5 300V306M1068 305.5h1M1070 303.5h1" stroke="#00ff00" stroke-width="1" fill="none" shape-rendering="crispEdges"/><polyline points="13,156.5 15,155.7 17,154.6 19,153.5 21,152.5 23,151.4 25,150.3 27,149.2 29,148.2 31,147.1 33,146.0 35,145.9 37,145.9 39,145.8 41,145.7 43,145.7 45,145.6 47,145.6 49,145.5 51,145.4 53,145.4 55,145.3 57,145.2 59,145.2 61,145.1 63,145.0 65,145.0 67,144.9 69,144.9 71,144.8 73,144.7 75,144.7 77,144.6 79,144.5 81,144.5 83,144.4 85,144.4 87,144.3 89,144.2 91,144.2 93,144.1 95,144.0 97,144.0 99,143.9 101,143.8 103,143.9 105,144.0 107,144.2 109,144.4 111,144.6 113,144.7 115,144.9 117,145.1 119,145.4 121,145.7 123,146.0 125,146.3 127,146.6 129,146.9 131,147.2 133,147.5 135,147.8 137,148.1 139,148.3 141,148.4 143,148.5 145,148.5 147,148.6 149,148.6 151,148.7 153,148.7 155,148.7 157,148.8 159,148.8 161,148.9 163,148.9 165,149.0 167,149.0 169,148.6 171,148.1 173,147.7 175,147.3 177,146.9 179,146.4 181,146.0 183,145.7 185,145.4 187,145.1 189,144.7 191,144.4 193,144.1 195,143.8 197,143.6 199,143.4 201,143.2 203,143.0 205,142.8 207,142.6 209,142.4 211,142.2 213,142.0 215,141.8 217,141.6 219,141.4 221,141.2 223,141.0 225,140.8 227,140.6 229,140.4 231,140.1 233,139.8 235,139.4 237,139.1 239,138.8 241,138.5 243,138.6 245,138.8 247,138.9 249,139.1 251,139.4 253,140.2 255,140.9 257,141.7 259,142.4 261,143.6 263,145.2 265,146.8 267,148.4 269,149.8 271,151.2 273,152.6 275,154.0 277,156.0 279,158.2 281,160.4 283,162.6 285,164.8 287,167.0 289,169.2 291,171.4 293,173.6 295,175.8 297,178.0 299,180.1 301,182.3 303,184.5 305,186.5 307,188.3 309,190.2 311,192.0 313,193.8 315,195.7 317,197.5 319,199.3 321,201.2 323,203.0 325,204.8 327,206.7 329,208.5 331,210.3 333,212.2 335,213.9 337,215.2 339,216.5 341,217.7 343,219.0 345,220.3 347,221.5 349,222.8 351,224.1 353,225.3 355,226.6 357,227.9 359,229.1 361,230.4 363,231.7 365,232.9 367,234.2 369,235.5 371,236.7 373,238.0 375,237.4 377,236.2 379,235.0 381,233.9 383,232.7 385,231.5 387,230.3 389,229.1 391,227.9 393,226.8 395,225.6 397,224.4 399,223.2 401,222.0 403,221.5 405,221.5 407,221.5 409,221.5 411,221.5 413,221.5 415,222.2 417,223.1 419,224.0 421,225.0 423,225.9 425,226.8 427,227.7 429,228.6 431,230.0 433,232.0 435,234.0 437,236.0 439,238.0 441,240.0 443,242.0 445,244.0 447,246.0 449,248.0 451,250.0 453,252.0 455,254.0 457,256.0 459,258.0 461,260.0 463,262.0 465,263.5 467,264.6 469,265.7 471,266.8 473,267.9 475,269.0 477,270.1 479,271.3 481,272.4 483,273.5 485,274.6 487,275.7 489,276.3 491,276.8 493,277.4 495,277.9 497,278.5 499,279.0 501,279.9 503,281.0 505,282.2 507,283.3 509,284.5 511,285.6 513,286.8 515,287.6 517,288.1 519,288.6 521,289.1 523,289.6 525,290.1 527,290.6 529,291.1 531,291.6 533,292.1 535,292.7 537,293.6 539,294.6 541,295.5 543,296.4 545,297.3 547,298.3 549,299.2 551,300.1 553,301.0 555,302.0 557,302.9 559,303.8 561,304.6 563,305.2 565,305.8 567,306.4 569,307.0 571,307.6 573,308.2 575,308.8 577,309.3 579,309.9 581,310.5 583,311.1 585,311.8 587,312.9 589,314.1 591,315.2 593,316.4 595,317.5 597,318.7 599,319.8 601,321.0 603,322.1 605,323.3 607,324.5 609,325.6 611,326.8 613,328.6 615,330.4 617,332.2 619,334.0 621,335.8 623,337.7 625,339.5 627,341.3 629,343.1 631,344.9 633,346.5 635,348.0 637,349.5 639,351.0 641,352.4 643,353.9 645,355.4 647,356.9 649,357.4 651,357.9 653,358.4 655,358.9 657,359.4 659,359.8 661,360.3 663,360.1 665,359.8 667,359.4 669,359.1 671,358.8 673,358.4 675,358.1 677,357.8 679,357.4 681,357.1 683,356.7 685,356.3 687,355.9 689,355.5 691,355.1 693,354.7 695,354.3 697,353.9 699,353.5 701,353.1 703,352.5 705,351.7 707,350.9 709,350.2 711,349.4 713,348.6 715,347.8 717,347.1 719,347.0 721,347.4 723,347.8 725,348.2 727,348.5 729,348.9 731,349.3 733,349.6 735,349.5 737,348.8 739,348.2 741,347.6 743,346.9 745,346.3 747,345.7 749,345.0 751,344.5 753,344.2 755,343.9 757,343.6 759,343.3 761,343.0 763,342.6 765,342.3 767,342.0 769,341.7 771,341.4 773,341.1 775,340.3 777,339.4 779,338.5 781,337.6 783,336.7 785,335.9 787,335.0 789,334.1 791,333.2 793,332.3 795,331.4 797,330.6 799,329.7 801,328.8 803,327.9 805,327.0 807,326.3 809,326.3 811,326.3 813,326.3 815,326.3 817,326.3 819,326.3 821,326.3 823,326.3 825,326.3 827,326.3 829,326.3 831,326.3 833,326.3 835,326.3 837,326.3 839,326.3 841,326.3 843,326.3 845,326.8 847,327.6 849,328.3 851,329.0 853,329.7 855,330.4 857,331.1 859,331.9 861,332.6 863,333.3 865,334.0 867,334.7 869,335.5 871,336.0 873,336.2 875,336.4 877,336.5 879,336.7 881,336.9 883,337.0 885,337.2 887,337.3 889,337.5 891,337.7 893,337.8 895,338.0 897,338.2 899,338.3 901,338.5 903,338.4 905,337.7 907,337.0 909,336.3 911,335.6 913,334.9 915,334.2 917,333.5 919,332.8 921,332.1 923,331.4 925,330.7 927,330.0 929,329.7 931,329.3 933,329.0 935,328.7 937,328.3 939,328.0 941,327.7 943,327.1 945,326.4 947,325.7 949,325.0 951,324.3 953,323.6 955,322.9 957,322.2 959,321.5 961,320.8 963,320.1 965,319.4 967,318.8 969,318.5 971,318.2 973,317.9 975,317.6 977,317.2 979,316.9 981,316.6 983,316.3 985,316.0 987,315.7 989,315.3 991,315.0 993,314.7 995,314.4 997,314.1 999,313.8 1001,313.4 1003,313.1 1005,312.8 1007,312.5 1009,312.2 1011,311.8 1013,311.5 1015,310.9 1017,310.1 1019,309.4 1021,308.7 1023,308.0 1025,307.3 1027,306.6 1029,305.9 1031,305.2 1033,304.4 1035,303.7 1037,303.0 1039,302.3 1041,301.6 1043,300.9 1045,300.2 1047,299.4 1049,299.2 1051,299.3 1053,299.4 1055,299.5 1057,299.5 1059,299.6 1061,299.7 1063,299.8 1065,299.8 1067,299.9 1069,300.0" stroke="#ff0000" stroke-width="1" fill="none" shape-rendering="crispEdges"/></svg><div class="r" style="left:16px;top:111px;width:210px;height:11px;background:#000;"></div><div class="t" style="left:17px;top:110.95px;font-size:10px;line-height:11.17px;color:#fff;transform:scaleX(0.9285);transform-origin:0 0;">EURUSD,M15&nbsp; 1.40821 1.40854 1.40804 1.40805</div><svg class="r" style="left:0;top:0" width="1382" height="400"><path d="M1061.5 109H1071L1066.2 114.5z" fill="#7a8fa5"/><path d="M13 383V389H19z" fill="#7a8fa5"/></svg><div class="r" style="left:1333px;top:131px;width:4px;height:1px;background:#fff;"></div><div class="t" style="left:1338px;top:124.75px;font-size:10px;line-height:11.17px;color:#fff;transform:scaleX(0.9129);transform-origin:0 0;">1.43330</div><div class="r" style="left:1333px;top:195px;width:4px;height:1px;background:#fff;"></div><div class="t" style="left:1338px;top:188.75px;font-size:10px;line-height:11.17px;color:#fff;transform:scaleX(0.9129);transform-origin:0 0;">1.42400</div><div class="r" style="left:1333px;top:227px;width:4px;height:1px;background:#fff;"></div><div class="t" style="left:1338px;top:220.75px;font-size:10px;line-height:11.17px;color:#fff;transform:scaleX(0.9129);transform-origin:0 0;">1.41930</div><div class="r" style="left:1333px;top:259px;width:4px;height:1px;background:#fff;"></div><div class="t" style="left:1338px;top:252.75px;font-size:10px;line-height:11.17px;color:#fff;transform:scaleX(0.9129);transform-origin:0 0;">1.41470</div><div class="r" style="left:1333px;top:291px;width:4px;height:1px;background:#fff;"></div><div class="t" style="left:1338px;top:284.75px;font-size:10px;line-height:11.17px;color:#fff;transform:scaleX(0.9129);transform-origin:0 0;">1.41000</div><div class="r" style="left:1333px;top:323px;width:4px;height:1px;background:#fff;"></div><div class="t" style="left:1338px;top:316.75px;font-size:10px;line-height:11.17px;color:#fff;transform:scaleX(0.9129);transform-origin:0 0;">1.40540</div><div class="r" style="left:1333px;top:355px;width:4px;height:1px;background:#fff;"></div><div class="t" style="left:1338px;top:348.75px;font-size:10px;line-height:11.17px;color:#fff;transform:scaleX(0.9129);transform-origin:0 0;">1.40070</div><div class="r" style="left:1333px;top:387px;width:4px;height:1px;background:#fff;"></div><div class="t" style="left:1338px;top:380.75px;font-size:10px;line-height:11.17px;color:#fff;transform:scaleX(0.9129);transform-origin:0 0;">1.39610</div><div class="r" style="left:1334px;top:160px;width:38px;height:10px;background:#ff0000;"></div><div class="t" style="left:1338px;top:158.75px;font-size:10px;line-height:11.17px;color:#000;transform:scaleX(0.9129);transform-origin:0 0;">1.42830</div><div class="r" style="left:1334px;top:261px;width:38px;height:10px;background:#00ff00;"></div><div class="t" style="left:1338px;top:259.75px;font-size:10px;line-height:11.17px;color:#000;transform:scaleX(0.9129);transform-origin:0 0;">1.41370</div><div class="r" style="left:1334px;top:300px;width:38px;height:10px;background:#ffffff;"></div><div class="t" style="left:1338px;top:298.75px;font-size:10px;line-height:11.17px;color:#000;transform:scaleX(0.9129);transform-origin:0 0;">1.40805</div><div class="r" style="left:1334px;top:342px;width:38px;height:10px;background:#00ff00;"></div><div class="t" style="left:1338px;top:340.75px;font-size:10px;line-height:11.17px;color:#000;transform:scaleX(0.9129);transform-origin:0 0;">1.40190</div><div class="r" style="left:13px;top:389px;width:1px;height:4px;background:#fff;"></div><div class="t" style="left:13px;top:393.45px;font-size:10px;line-height:11.17px;color:#fff;transform:scaleX(0.9350);transform-origin:0 0;">19 May 2011</div><div class="r" style="left:77px;top:389px;width:1px;height:4px;background:#fff;"></div><div class="t" style="left:77px;top:393.45px;font-size:10px;line-height:11.17px;color:#fff;transform:scaleX(0.9350);transform-origin:0 0;">20 May 00:30</div><div class="r" style="left:141px;top:389px;width:1px;height:4px;background:#fff;"></div><div class="t" style="left:141px;top:393.45px;font-size:10px;line-height:11.17px;color:#fff;transform:scaleX(0.9350);transform-origin:0 0;">20 May 04:30</div><div class="r" style="left:205px;top:389px;width:1px;height:4px;background:#fff;"></div><div class="t" style="left:205px;top:393.45px;font-size:10px;line-height:11.17px;color:#fff;transform:scaleX(0.9350);transform-origin:0 0;">20 May 08:30</div><div class="r" style="left:269px;top:389px;width:1px;height:4px;background:#fff;"></div><div class="t" style="left:269px;top:393.45px;font-size:10px;line-height:11.17px;color:#fff;transform:scaleX(0.9350);transform-origin:0 0;">20 May 12:30</div><div class="r" style="left:333px;top:389px;width:1px;height:4px;background:#fff;"></div><div class="t" style="left:333px;top:393.45px;font-size:10px;line-height:11.17px;color:#fff;transform:scaleX(0.9350);transform-origin:0 0;">20 May 16:30</div><div class="r" style="left:397px;top:389px;width:1px;height:4px;background:#fff;"></div><div class="t" style="left:397px;top:393.45px;font-size:10px;line-height:11.17px;color:#fff;transform:scaleX(0.9350);transform-origin:0 0;">20 May 20:30</div><div class="r" style="left:461px;top:389px;width:1px;height:4px;background:#fff;"></div><div class="t" style="left:461px;top:393.45px;font-size:10px;line-height:11.17px;color:#fff;transform:scaleX(0.9350);transform-origin:0 0;">23 May 00:30</div><div class="r" style="left:525px;top:389px;width:1px;height:4px;background:#fff;"></div><div class="t" style="left:525px;top:393.45px;font-size:10px;line-height:11.17px;color:#fff;transform:scaleX(0.9350);transform-origin:0 0;">23 May 04:30</div><div class="r" style="left:589px;top:389px;width:1px;height:4px;background:#fff;"></div><div class="t" style="left:589px;top:393.45px;font-size:10px;line-height:11.17px;color:#fff;transform:scaleX(0.9350);transform-origin:0 0;">23 May 08:30</div><div class="r" style="left:653px;top:389px;width:1px;height:4px;background:#fff;"></div><div class="t" style="left:653px;top:393.45px;font-size:10px;line-height:11.17px;color:#fff;transform:scaleX(0.9350);transform-origin:0 0;">23 May 12:30</div><div class="r" style="left:717px;top:389px;width:1px;height:4px;background:#fff;"></div><div class="t" style="left:717px;top:393.45px;font-size:10px;line-height:11.17px;color:#fff;transform:scaleX(0.9350);transform-origin:0 0;">23 May 16:30</div><div class="r" style="left:781px;top:389px;width:1px;height:4px;background:#fff;"></div><div class="t" style="left:781px;top:393.45px;font-size:10px;line-height:11.17px;color:#fff;transform:scaleX(0.9350);transform-origin:0 0;">23 May 20:30</div><div class="r" style="left:845px;top:389px;width:1px;height:4px;background:#fff;"></div><div class="t" style="left:845px;top:393.45px;font-size:10px;line-height:11.17px;color:#fff;transform:scaleX(0.9350);transform-origin:0 0;">24 May 00:30</div><div class="r" style="left:909px;top:389px;width:1px;height:4px;background:#fff;"></div><div class="t" style="left:909px;top:393.45px;font-size:10px;line-height:11.17px;color:#fff;transform:scaleX(0.9350);transform-origin:0 0;">24 May 04:30</div><div class="r" style="left:973px;top:389px;width:1px;height:4px;background:#fff;"></div><div class="t" style="left:973px;top:393.45px;font-size:10px;line-height:11.17px;color:#fff;transform:scaleX(0.9350);transform-origin:0 0;">24 May 08:30</div><div class="r" style="left:1037px;top:389px;width:1px;height:4px;background:#fff;"></div><div class="t" style="left:1037px;top:393.45px;font-size:10px;line-height:11.17px;color:#fff;transform:scaleX(0.9350);transform-origin:0 0;">24 May 12:30</div><div class="r" style="left:8px;top:407px;width:1366px;height:2px;background:#ffffff;"></div><div class="r" style="left:8px;top:409px;width:1366px;height:1px;background:#000;"></div><div class="r" style="left:8px;top:410px;width:1366px;height:19px;background:#f0f0f0;"></div><div class="r" style="left:8px;top:410px;width:2px;height:18px;background:#8a8a8a;"></div><div class="r" style="left:10px;top:410px;width:1px;height:18px;background:#ffffff;"></div><div class="r" style="left:12px;top:409px;width:88px;height:19px;background:#fff;border:1px solid #000;border-top:none;box-sizing:border-box;"></div><div class="t" style="left:23px;top:412.05px;font-size:11px;line-height:12.29px;color:#000;transform:scaleX(0.9167);transform-origin:0 0;">EURUSD,M15</div><div class="t" style="left:110px;top:412.05px;font-size:11px;line-height:12.29px;color:#5e6e80;transform:scaleX(0.9477);transform-origin:0 0;">USDCHF,H4</div><div class="r" style="left:181px;top:413px;width:1px;height:12px;background:#6d6d6d;"></div><div class="t" style="left:191.5px;top:412.05px;font-size:11px;line-height:12.29px;color:#5e6e80;transform:scaleX(0.8966);transform-origin:0 0;">GBPUSD,H4</div><div class="r" style="left:261px;top:413px;width:1px;height:12px;background:#6d6d6d;"></div><div class="t" style="left:270px;top:412.05px;font-size:11px;line-height:12.29px;color:#5e6e80;transform:scaleX(0.9391);transform-origin:0 0;">USDJPY,H4</div><div class="r" style="left:336px;top:413px;width:1px;height:12px;background:#6d6d6d;"></div><div class="t" style="left:346px;top:412.05px;font-size:11px;line-height:12.29px;color:#5e6e80;transform:scaleX(0.9222);transform-origin:0 0;">EURJPY,H1</div><div class="r" style="left:413px;top:413px;width:1px;height:12px;background:#6d6d6d;"></div><div class="r" style="left:8px;top:429px;width:1366px;height:282px;background:#f0f0f0;"></div><div class="r" style="left:9px;top:447px;width:13px;height:264px;background:linear-gradient(180deg,#d6e3f0 0%,#ccdae8 50%,#c3d1df 100%);"></div><svg class="r" style="left:11px;top:435px" width="8" height="7"><path d="M1.5 1L6.5 6M6.5 1L1.5 6" stroke="#000" stroke-width="1.7"/></svg><div class="r" style="left:23px;top:433px;width:1348px;height:258px;background:#fff;"></div><div class="r" style="left:23px;top:433px;width:1348px;height:1px;background:#a0a0a0;"></div><div class="r" style="left:23px;top:433px;width:1px;height:258px;background:#a0a0a0;"></div><div class="r" style="left:24px;top:434px;width:1346px;height:23px;background:linear-gradient(180deg,#ffffff 0%,#ffffff 38%,#f1f2f4 39%,#f1f2f4 100%);"></div><div class="r" style="left:24px;top:456px;width:1346px;height:1px;background:#d5d5d5;"></div><div class="r" style="left:24px;top:457px;width:1346px;height:1px;background:#ffffff;"></div><div class="r" style="left:24px;top:458px;width:1346px;height:1px;background:#c8c8c8;"></div><div class="t" style="left:31px;top:440px;font-size:11px;color:#000;line-height:13px;">Objednávka</div><svg class="r" style="left:103px;top:442px" width="10" height="9"><path d="M1.5 7.5L5 1.5" stroke="#4a5a6a" stroke-width="1.2"/><path d="M5 7.5L6.8 2.5 8.6 7.5z" fill="none" stroke="#ffffff" stroke-width="1"/></svg><div class="r" style="left:142px;top:435px;width:1px;height:21px;background:#e0e0e0;"></div><div class="t" style="left:142px;top:440px;font-size:11px;color:#000;line-height:13px;width:197px;text-align:right;">Čas</div><div class="r" style="left:344px;top:435px;width:1px;height:21px;background:#e0e0e0;"></div><div class="t" style="left:344px;top:440px;font-size:11px;color:#000;line-height:13px;width:87px;text-align:right;">Typ</div><div class="r" style="left:436px;top:435px;width:1px;height:21px;background:#e0e0e0;"></div><div class="t" style="left:436px;top:440px;font-size:11px;color:#000;line-height:13px;width:68px;text-align:right;">Loty</div><div class="r" style="left:509px;top:435px;width:1px;height:21px;background:#e0e0e0;"></div><div class="t" style="left:509px;top:440px;font-size:11px;color:#000;line-height:13px;width:87px;text-align:right;">Symbol</div><div class="r" style="left:601px;top:435px;width:1px;height:21px;background:#e0e0e0;"></div><div class="t" style="left:601px;top:440px;font-size:11px;color:#000;line-height:13px;width:88px;text-align:right;">Cena</div><div class="r" style="left:694px;top:435px;width:1px;height:21px;background:#e0e0e0;"></div><div class="t" style="left:694px;top:440px;font-size:11px;color:#000;line-height:13px;width:87px;text-align:right;">S / L</div><div class="r" style="left:786px;top:435px;width:1px;height:21px;background:#e0e0e0;"></div><div class="t" style="left:786px;top:440px;font-size:11px;color:#000;line-height:13px;width:86px;text-align:right;">T / P</div><div class="r" style="left:877px;top:435px;width:1px;height:21px;background:#e0e0e0;"></div><div class="t" style="left:877px;top:440px;font-size:11px;color:#000;line-height:13px;width:197px;text-align:right;">Čas</div><div class="r" style="left:1079px;top:435px;width:1px;height:21px;background:#e0e0e0;"></div><div class="t" style="left:1079px;top:440px;font-size:11px;color:#000;line-height:13px;width:87px;text-align:right;">Cena</div><div class="r" style="left:1171px;top:435px;width:1px;height:21px;background:#e0e0e0;"></div><div class="t" style="left:1171px;top:440px;font-size:11px;color:#000;line-height:13px;width:87px;text-align:right;">Swap</div><div class="r" style="left:1263px;top:435px;width:1px;height:21px;background:#e0e0e0;"></div><div class="t" style="left:1263px;top:440px;font-size:11px;color:#000;line-height:13px;width:102px;text-align:right;">Zisk</div><div class="r" style="left:24px;top:459px;width:1346px;height:19px;background:#ffffff;"></div><div class="r" style="left:24px;top:478px;width:1346px;height:1px;background:#d0d0d0;"></div><div class="r" style="left:141px;top:459px;width:1px;height:19px;background:#d0d0d0;"></div><div class="r" style="left:343px;top:459px;width:1px;height:19px;background:#d0d0d0;"></div><div class="r" style="left:435px;top:459px;width:1px;height:19px;background:#d0d0d0;"></div><div class="r" style="left:1262px;top:459px;width:1px;height:19px;background:#d0d0d0;"></div><div class="r" style="left:27px;top:462px;width:11px;height:12px;border:1px solid #707070;border-radius:1px;background:linear-gradient(#fff,#ddd);box-sizing:border-box"></div><svg class="r" style="left:28px;top:463px" width="10" height="10"><path d="M5 1L9 5H7V8H3V5H1Z" fill="#12a012"/></svg><div class="t" style="left:48px;top:462px;font-size:11px;color:#000;line-height:13px;">44106313</div><div class="t" style="left:142px;top:462px;font-size:11px;color:#000;line-height:13px;width:198px;text-align:right;">2011.05.24 10:54</div><div class="t" style="left:344px;top:462px;font-size:11px;color:#000;line-height:13px;width:88px;text-align:right;">balance</div><div class="t" style="left:1171px;top:462px;font-size:11px;color:#000;line-height:13px;width:88px;text-align:right;">Deposit</div><div class="t" style="left:1263px;top:462px;font-size:11px;color:#000;line-height:13px;width:103px;text-align:right;">5 000.00</div><div class="r" style="left:24px;top:479px;width:1346px;height:19px;background:#ebebeb;"></div><div class="r" style="left:24px;top:498px;width:1346px;height:1px;background:#d0d0d0;"></div><div class="r" style="left:141px;top:479px;width:1px;height:19px;background:#d0d0d0;"></div><div class="r" style="left:343px;top:479px;width:1px;height:19px;background:#d0d0d0;"></div><div class="r" style="left:435px;top:479px;width:1px;height:19px;background:#d0d0d0;"></div><div class="r" style="left:508px;top:479px;width:1px;height:19px;background:#d0d0d0;"></div><div class="r" style="left:600px;top:479px;width:1px;height:19px;background:#d0d0d0;"></div><div class="r" style="left:693px;top:479px;width:1px;height:19px;background:#d0d0d0;"></div><div class="r" style="left:785px;top:479px;width:1px;height:19px;background:#d0d0d0;"></div><div class="r" style="left:876px;top:479px;width:1px;height:19px;background:#d0d0d0;"></div><div class="r" style="left:1078px;top:479px;width:1px;height:19px;background:#d0d0d0;"></div><div class="r" style="left:1170px;top:479px;width:1px;height:19px;background:#d0d0d0;"></div><div class="r" style="left:1262px;top:479px;width:1px;height:19px;background:#d0d0d0;"></div><svg class="r" style="left:26px;top:480px" width="18" height="18"><defs><radialGradient id="rb1" cx="0.35" cy="0.3" r="0.8"><stop offset="0" stop-color="#bfe6ff"/><stop offset="0.55" stop-color="#1a8af0"/><stop offset="1" stop-color="#1a8af0"/></radialGradient></defs><path d="M1.6 2.2Q1.6 1.5 2.3 1.5H9.3L12.5 4.7V14.3Q12.5 15 11.8 15H2.3Q1.6 15 1.6 14.3Z" fill="#fbfbfb" stroke="#4a4a4a" stroke-width="1.1"/><path d="M9.3 1.5V4.7H12.5" fill="#fff" stroke="#4a4a4a" stroke-width="1.1"/><circle cx="11.5" cy="12.5" r="3.4" fill="url(#rb1)" stroke="#0a4aa0" stroke-width="0.8"/></svg><div class="t" style="left:48px;top:482px;font-size:11px;color:#000;line-height:13px;">44111642</div><div class="t" style="left:142px;top:482px;font-size:11px;color:#000;line-height:13px;width:198px;text-align:right;">2011.05.24 13:26</div><div class="t" style="left:344px;top:482px;font-size:11px;color:#000;line-height:13px;width:88px;text-align:right;">buy</div><div class="t" style="left:436px;top:482px;font-size:11px;color:#000;line-height:13px;width:69px;text-align:right;">4.00</div><div class="t" style="left:509px;top:482px;font-size:11px;color:#000;line-height:13px;width:88px;text-align:right;">eurusd</div><div class="t" style="left:601px;top:482px;font-size:11px;color:#000;line-height:13px;width:89px;text-align:right;">1.40817</div><div class="t" style="left:694px;top:482px;font-size:11px;color:#000;line-height:13px;width:88px;text-align:right;">0.00000</div><div class="t" style="left:786px;top:482px;font-size:11px;color:#000;line-height:13px;width:87px;text-align:right;">0.00000</div><div class="t" style="left:877px;top:482px;font-size:11px;color:#000;line-height:13px;width:198px;text-align:right;">2011.05.24 13:42</div><div class="t" style="left:1079px;top:482px;font-size:11px;color:#000;line-height:13px;width:88px;text-align:right;">1.40815</div><div class="t" style="left:1171px;top:482px;font-size:11px;color:#000;line-height:13px;width:88px;text-align:right;">0.00</div><div class="t" style="left:1263px;top:482px;font-size:11px;color:#000;line-height:13px;width:103px;text-align:right;">-8.00</div><div class="r" style="left:24px;top:499px;width:1346px;height:19px;background:#ffffff;"></div><div class="r" style="left:24px;top:518px;width:1346px;height:1px;background:#d0d0d0;"></div><div class="r" style="left:141px;top:499px;width:1px;height:19px;background:#d0d0d0;"></div><div class="r" style="left:343px;top:499px;width:1px;height:19px;background:#d0d0d0;"></div><div class="r" style="left:435px;top:499px;width:1px;height:19px;background:#d0d0d0;"></div><div class="r" style="left:508px;top:499px;width:1px;height:19px;background:#d0d0d0;"></div><div class="r" style="left:600px;top:499px;width:1px;height:19px;background:#d0d0d0;"></div><div class="r" style="left:693px;top:499px;width:1px;height:19px;background:#d0d0d0;"></div><div class="r" style="left:785px;top:499px;width:1px;height:19px;background:#d0d0d0;"></div><div class="r" style="left:876px;top:499px;width:1px;height:19px;background:#d0d0d0;"></div><div class="r" style="left:1078px;top:499px;width:1px;height:19px;background:#d0d0d0;"></div><div class="r" style="left:1170px;top:499px;width:1px;height:19px;background:#d0d0d0;"></div><div class="r" style="left:1262px;top:499px;width:1px;height:19px;background:#d0d0d0;"></div><svg class="r" style="left:26px;top:500px" width="18" height="18"><defs><radialGradient id="rb2" cx="0.35" cy="0.3" r="0.8"><stop offset="0" stop-color="#ffd9a0"/><stop offset="0.55" stop-color="#d07000"/><stop offset="1" stop-color="#d07000"/></radialGradient></defs><path d="M1.6 2.2Q1.6 1.5 2.3 1.5H9.3L12.5 4.7V14.3Q12.5 15 11.8 15H2.3Q1.6 15 1.6 14.3Z" fill="#fbfbfb" stroke="#4a4a4a" stroke-width="1.1"/><path d="M9.3 1.5V4.7H12.5" fill="#fff" stroke="#4a4a4a" stroke-width="1.1"/><circle cx="11.5" cy="12.5" r="3.4" fill="url(#rb2)" stroke="#800000" stroke-width="0.8"/></svg><div class="t" style="left:48px;top:502px;font-size:11px;color:#000;line-height:13px;">44112250</div><div class="t" style="left:142px;top:502px;font-size:11px;color:#000;line-height:13px;width:198px;text-align:right;">2011.05.24 13:55</div><div class="t" style="left:344px;top:502px;font-size:11px;color:#000;line-height:13px;width:88px;text-align:right;">sell</div><div class="t" style="left:436px;top:502px;font-size:11px;color:#000;line-height:13px;width:69px;text-align:right;">4.00</div><div class="t" style="left:509px;top:502px;font-size:11px;color:#000;line-height:13px;width:88px;text-align:right;">eurusd</div><div class="t" style="left:601px;top:502px;font-size:11px;color:#000;line-height:13px;width:89px;text-align:right;">1.40841</div><div class="t" style="left:694px;top:502px;font-size:11px;color:#000;line-height:13px;width:88px;text-align:right;">0.00000</div><div class="t" style="left:786px;top:502px;font-size:11px;color:#000;line-height:13px;width:87px;text-align:right;">0.00000</div><div class="t" style="left:877px;top:502px;font-size:11px;color:#000;line-height:13px;width:198px;text-align:right;">2011.05.24 13:56</div><div class="t" style="left:1079px;top:502px;font-size:11px;color:#000;line-height:13px;width:88px;text-align:right;">1.40830</div><div class="t" style="left:1171px;top:502px;font-size:11px;color:#000;line-height:13px;width:88px;text-align:right;">0.00</div><div class="t" style="left:1263px;top:502px;font-size:11px;color:#000;line-height:13px;width:103px;text-align:right;">44.00</div><div class="r" style="left:24px;top:518px;width:1346px;height:20px;background:#3399ff;"></div><div class="r" style="left:24px;top:538px;width:1346px;height:1px;background:#d0d0d0;"></div><div class="r" style="left:141px;top:519px;width:1px;height:19px;background:#d0d0d0;"></div><div class="r" style="left:343px;top:519px;width:1px;height:19px;background:#d0d0d0;"></div><div class="r" style="left:435px;top:519px;width:1px;height:19px;background:#d0d0d0;"></div><div class="r" style="left:508px;top:519px;width:1px;height:19px;background:#d0d0d0;"></div><div class="r" style="left:600px;top:519px;width:1px;height:19px;background:#d0d0d0;"></div><div class="r" style="left:693px;top:519px;width:1px;height:19px;background:#d0d0d0;"></div><div class="r" style="left:785px;top:519px;width:1px;height:19px;background:#d0d0d0;"></div><div class="r" style="left:876px;top:519px;width:1px;height:19px;background:#d0d0d0;"></div><div class="r" style="left:1078px;top:519px;width:1px;height:19px;background:#d0d0d0;"></div><div class="r" style="left:1170px;top:519px;width:1px;height:19px;background:#d0d0d0;"></div><div class="r" style="left:1262px;top:519px;width:1px;height:19px;background:#d0d0d0;"></div><svg class="r" style="left:26px;top:520px" width="18" height="18"><defs><radialGradient id="rb3" cx="0.35" cy="0.3" r="0.8"><stop offset="0" stop-color="#bfe6ff"/><stop offset="0.55" stop-color="#1a8af0"/><stop offset="1" stop-color="#1a8af0"/></radialGradient></defs><path d="M1.6 2.2Q1.6 1.5 2.3 1.5H9.3L12.5 4.7V14.3Q12.5 15 11.8 15H2.3Q1.6 15 1.6 14.3Z" fill="#fbfbfb" stroke="#4a4a4a" stroke-width="1.1"/><path d="M9.3 1.5V4.7H12.5" fill="#fff" stroke="#4a4a4a" stroke-width="1.1"/><circle cx="11.5" cy="12.5" r="3.4" fill="url(#rb3)" stroke="#0a4aa0" stroke-width="0.8"/></svg><div class="t" style="left:48px;top:522px;font-size:11px;color:#fff;line-height:13px;">44112278</div><div class="t" style="left:142px;top:522px;font-size:11px;color:#fff;line-height:13px;width:198px;text-align:right;">2011.05.24 13:58</div><div class="t" style="left:344px;top:522px;font-size:11px;color:#fff;line-height:13px;width:88px;text-align:right;">buy</div><div class="t" style="left:436px;top:522px;font-size:11px;color:#fff;line-height:13px;width:69px;text-align:right;">4.00</div><div class="t" style="left:509px;top:522px;font-size:11px;color:#fff;line-height:13px;width:88px;text-align:right;">eurusd</div><div class="t" style="left:601px;top:522px;font-size:11px;color:#fff;line-height:13px;width:89px;text-align:right;">1.40777</div><div class="t" style="left:694px;top:522px;font-size:11px;color:#fff;line-height:13px;width:88px;text-align:right;">0.00000</div><div class="t" style="left:786px;top:522px;font-size:11px;color:#fff;line-height:13px;width:87px;text-align:right;">0.00000</div><div class="t" style="left:877px;top:522px;font-size:11px;color:#fff;line-height:13px;width:198px;text-align:right;">2011.05.24 13:58</div><div class="t" style="left:1079px;top:522px;font-size:11px;color:#fff;line-height:13px;width:88px;text-align:right;">1.40804</div><div class="t" style="left:1171px;top:522px;font-size:11px;color:#fff;line-height:13px;width:88px;text-align:right;">0.00</div><div class="t" style="left:1263px;top:522px;font-size:11px;color:#fff;line-height:13px;width:103px;text-align:right;">108.00</div><div class="r" style="left:24px;top:539px;width:1346px;height:19px;background:#ffffff;"></div><div class="r" style="left:24px;top:558px;width:1346px;height:1px;background:#d0d0d0;"></div><div class="r" style="left:141px;top:539px;width:1px;height:19px;background:#d0d0d0;"></div><div class="r" style="left:343px;top:539px;width:1px;height:19px;background:#d0d0d0;"></div><div class="r" style="left:435px;top:539px;width:1px;height:19px;background:#d0d0d0;"></div><div class="r" style="left:508px;top:539px;width:1px;height:19px;background:#d0d0d0;"></div><div class="r" style="left:600px;top:539px;width:1px;height:19px;background:#d0d0d0;"></div><div class="r" style="left:693px;top:539px;width:1px;height:19px;background:#d0d0d0;"></div><div class="r" style="left:785px;top:539px;width:1px;height:19px;background:#d0d0d0;"></div><div class="r" style="left:876px;top:539px;width:1px;height:19px;background:#d0d0d0;"></div><div class="r" style="left:1078px;top:539px;width:1px;height:19px;background:#d0d0d0;"></div><div class="r" style="left:1170px;top:539px;width:1px;height:19px;background:#d0d0d0;"></div><div class="r" style="left:1262px;top:539px;width:1px;height:19px;background:#d0d0d0;"></div><svg class="r" style="left:26px;top:540px" width="18" height="18"><defs><radialGradient id="rb4" cx="0.35" cy="0.3" r="0.8"><stop offset="0" stop-color="#bfe6ff"/><stop offset="0.55" stop-color="#1a8af0"/><stop offset="1" stop-color="#1a8af0"/></radialGradient></defs><path d="M1.6 2.2Q1.6 1.5 2.3 1.5H9.3L12.5 4.7V14.3Q12.5 15 11.8 15H2.3Q1.6 15 1.6 14.3Z" fill="#fbfbfb" stroke="#4a4a4a" stroke-width="1.1"/><path d="M9.3 1.5V4.7H12.5" fill="#fff" stroke="#4a4a4a" stroke-width="1.1"/><circle cx="11.5" cy="12.5" r="3.4" fill="url(#rb4)" stroke="#0a4aa0" stroke-width="0.8"/></svg><div class="t" style="left:48px;top:542px;font-size:11px;color:#000;line-height:13px;">44112330</div><div class="t" style="left:142px;top:542px;font-size:11px;color:#000;line-height:13px;width:198px;text-align:right;">2011.05.24 13:58</div><div class="t" style="left:344px;top:542px;font-size:11px;color:#000;line-height:13px;width:88px;text-align:right;">buy</div><div class="t" style="left:436px;top:542px;font-size:11px;color:#000;line-height:13px;width:69px;text-align:right;">4.00</div><div class="t" style="left:509px;top:542px;font-size:11px;color:#000;line-height:13px;width:88px;text-align:right;">eurusd</div><div class="t" style="left:601px;top:542px;font-size:11px;color:#000;line-height:13px;width:89px;text-align:right;">1.40803</div><div class="t" style="left:694px;top:542px;font-size:11px;color:#000;line-height:13px;width:88px;text-align:right;">0.00000</div><div class="t" style="left:786px;top:542px;font-size:11px;color:#000;line-height:13px;width:87px;text-align:right;">0.00000</div><div class="t" style="left:877px;top:542px;font-size:11px;color:#000;line-height:13px;width:198px;text-align:right;">2011.05.24 14:21</div><div class="t" style="left:1079px;top:542px;font-size:11px;color:#000;line-height:13px;width:88px;text-align:right;">1.40940</div><div class="t" style="left:1171px;top:542px;font-size:11px;color:#000;line-height:13px;width:88px;text-align:right;">0.00</div><div class="t" style="left:1263px;top:542px;font-size:11px;color:#000;line-height:13px;width:103px;text-align:right;">548.00</div><div class="r" style="left:24px;top:559px;width:1346px;height:19px;background:#ebebeb;"></div><div class="r" style="left:24px;top:578px;width:1346px;height:1px;background:#d0d0d0;"></div><div class="r" style="left:141px;top:559px;width:1px;height:19px;background:#d0d0d0;"></div><div class="r" style="left:343px;top:559px;width:1px;height:19px;background:#d0d0d0;"></div><div class="r" style="left:435px;top:559px;width:1px;height:19px;background:#d0d0d0;"></div><div class="r" style="left:508px;top:559px;width:1px;height:19px;background:#d0d0d0;"></div><div class="r" style="left:600px;top:559px;width:1px;height:19px;background:#d0d0d0;"></div><div class="r" style="left:693px;top:559px;width:1px;height:19px;background:#d0d0d0;"></div><div class="r" style="left:785px;top:559px;width:1px;height:19px;background:#d0d0d0;"></div><div class="r" style="left:876px;top:559px;width:1px;height:19px;background:#d0d0d0;"></div><div class="r" style="left:1078px;top:559px;width:1px;height:19px;background:#d0d0d0;"></div><div class="r" style="left:1170px;top:559px;width:1px;height:19px;background:#d0d0d0;"></div><div class="r" style="left:1262px;top:559px;width:1px;height:19px;background:#d0d0d0;"></div><svg class="r" style="left:26px;top:560px" width="18" height="18"><defs><radialGradient id="rb5" cx="0.35" cy="0.3" r="0.8"><stop offset="0" stop-color="#bfe6ff"/><stop offset="0.55" stop-color="#1a8af0"/><stop offset="1" stop-color="#1a8af0"/></radialGradient></defs><path d="M1.6 2.2Q1.6 1.5 2.3 1.5H9.3L12.5 4.7V14.3Q12.5 15 11.8 15H2.3Q1.6 15 1.6 14.3Z" fill="#fbfbfb" stroke="#4a4a4a" stroke-width="1.1"/><path d="M9.3 1.5V4.7H12.5" fill="#fff" stroke="#4a4a4a" stroke-width="1.1"/><circle cx="11.5" cy="12.5" r="3.4" fill="url(#rb5)" stroke="#0a4aa0" stroke-width="0.8"/></svg><div class="t" style="left:48px;top:562px;font-size:11px;color:#000;line-height:13px;">44112387</div><div class="t" style="left:142px;top:562px;font-size:11px;color:#000;line-height:13px;width:198px;text-align:right;">2011.05.24 14:01</div><div class="t" style="left:344px;top:562px;font-size:11px;color:#000;line-height:13px;width:88px;text-align:right;">buy</div><div class="t" style="left:436px;top:562px;font-size:11px;color:#000;line-height:13px;width:69px;text-align:right;">4.00</div><div class="t" style="left:509px;top:562px;font-size:11px;color:#000;line-height:13px;width:88px;text-align:right;">eurusd</div><div class="t" style="left:601px;top:562px;font-size:11px;color:#000;line-height:13px;width:89px;text-align:right;">1.40853</div><div class="t" style="left:694px;top:562px;font-size:11px;color:#000;line-height:13px;width:88px;text-align:right;">0.00000</div><div class="t" style="left:786px;top:562px;font-size:11px;color:#000;line-height:13px;width:87px;text-align:right;">0.00000</div><div class="t" style="left:877px;top:562px;font-size:11px;color:#000;line-height:13px;width:198px;text-align:right;">2011.05.24 14:21</div><div class="t" style="left:1079px;top:562px;font-size:11px;color:#000;line-height:13px;width:88px;text-align:right;">1.40931</div><div class="t" style="left:1171px;top:562px;font-size:11px;color:#000;line-height:13px;width:88px;text-align:right;">0.00</div><div class="t" style="left:1263px;top:562px;font-size:11px;color:#000;line-height:13px;width:103px;text-align:right;">312.00</div><div class="r" style="left:24px;top:579px;width:1346px;height:19px;background:#ffffff;"></div><div class="r" style="left:24px;top:598px;width:1346px;height:1px;background:#d0d0d0;"></div><div class="r" style="left:141px;top:579px;width:1px;height:19px;background:#d0d0d0;"></div><div class="r" style="left:343px;top:579px;width:1px;height:19px;background:#d0d0d0;"></div><div class="r" style="left:435px;top:579px;width:1px;height:19px;background:#d0d0d0;"></div><div class="r" style="left:508px;top:579px;width:1px;height:19px;background:#d0d0d0;"></div><div class="r" style="left:600px;top:579px;width:1px;height:19px;background:#d0d0d0;"></div><div class="r" style="left:693px;top:579px;width:1px;height:19px;background:#d0d0d0;"></div><div class="r" style="left:785px;top:579px;width:1px;height:19px;background:#d0d0d0;"></div><div class="r" style="left:876px;top:579px;width:1px;height:19px;background:#d0d0d0;"></div><div class="r" style="left:1078px;top:579px;width:1px;height:19px;background:#d0d0d0;"></div><div class="r" style="left:1170px;top:579px;width:1px;height:19px;background:#d0d0d0;"></div><div class="r" style="left:1262px;top:579px;width:1px;height:19px;background:#d0d0d0;"></div><svg class="r" style="left:26px;top:580px" width="18" height="18"><defs><radialGradient id="rb6" cx="0.35" cy="0.3" r="0.8"><stop offset="0" stop-color="#bfe6ff"/><stop offset="0.55" stop-color="#1a8af0"/><stop offset="1" stop-color="#1a8af0"/></radialGradient></defs><path d="M1.6 2.2Q1.6 1.5 2.3 1.5H9.3L12.5 4.7V14.3Q12.5 15 11.8 15H2.3Q1.6 15 1.6 14.3Z" fill="#fbfbfb" stroke="#4a4a4a" stroke-width="1.1"/><path d="M9.3 1.5V4.7H12.5" fill="#fff" stroke="#4a4a4a" stroke-width="1.1"/><circle cx="11.5" cy="12.5" r="3.4" fill="url(#rb6)" stroke="#0a4aa0" stroke-width="0.8"/></svg><div class="t" style="left:48px;top:582px;font-size:11px;color:#000;line-height:13px;">44112419</div><div class="t" style="left:142px;top:582px;font-size:11px;color:#000;line-height:13px;width:198px;text-align:right;">2011.05.24 14:04</div><div class="t" style="left:344px;top:582px;font-size:11px;color:#000;line-height:13px;width:88px;text-align:right;">buy</div><div class="t" style="left:436px;top:582px;font-size:11px;color:#000;line-height:13px;width:69px;text-align:right;">4.00</div><div class="t" style="left:509px;top:582px;font-size:11px;color:#000;line-height:13px;width:88px;text-align:right;">eurusd</div><div class="t" style="left:601px;top:582px;font-size:11px;color:#000;line-height:13px;width:89px;text-align:right;">1.40870</div><div class="t" style="left:694px;top:582px;font-size:11px;color:#000;line-height:13px;width:88px;text-align:right;">0.00000</div><div class="t" style="left:786px;top:582px;font-size:11px;color:#000;line-height:13px;width:87px;text-align:right;">0.00000</div><div class="t" style="left:877px;top:582px;font-size:11px;color:#000;line-height:13px;width:198px;text-align:right;">2011.05.24 14:21</div><div class="t" style="left:1079px;top:582px;font-size:11px;color:#000;line-height:13px;width:88px;text-align:right;">1.40947</div><div class="t" style="left:1171px;top:582px;font-size:11px;color:#000;line-height:13px;width:88px;text-align:right;">0.00</div><div class="t" style="left:1263px;top:582px;font-size:11px;color:#000;line-height:13px;width:103px;text-align:right;">308.00</div><div class="r" style="left:24px;top:599px;width:1346px;height:19px;background:#ebebeb;"></div><div class="r" style="left:24px;top:618px;width:1346px;height:1px;background:#d0d0d0;"></div><div class="r" style="left:141px;top:599px;width:1px;height:19px;background:#d0d0d0;"></div><div class="r" style="left:343px;top:599px;width:1px;height:19px;background:#d0d0d0;"></div><div class="r" style="left:435px;top:599px;width:1px;height:19px;background:#d0d0d0;"></div><div class="r" style="left:508px;top:599px;width:1px;height:19px;background:#d0d0d0;"></div><div class="r" style="left:600px;top:599px;width:1px;height:19px;background:#d0d0d0;"></div><div class="r" style="left:693px;top:599px;width:1px;height:19px;background:#d0d0d0;"></div><div class="r" style="left:785px;top:599px;width:1px;height:19px;background:#d0d0d0;"></div><div class="r" style="left:876px;top:599px;width:1px;height:19px;background:#d0d0d0;"></div><div class="r" style="left:1078px;top:599px;width:1px;height:19px;background:#d0d0d0;"></div><div class="r" style="left:1170px;top:599px;width:1px;height:19px;background:#d0d0d0;"></div><div class="r" style="left:1262px;top:599px;width:1px;height:19px;background:#d0d0d0;"></div><svg class="r" style="left:26px;top:600px" width="18" height="18"><defs><radialGradient id="rb7" cx="0.35" cy="0.3" r="0.8"><stop offset="0" stop-color="#bfe6ff"/><stop offset="0.55" stop-color="#1a8af0"/><stop offset="1" stop-color="#1a8af0"/></radialGradient></defs><path d="M1.6 2.2Q1.6 1.5 2.3 1.5H9.3L12.5 4.7V14.3Q12.5 15 11.8 15H2.3Q1.6 15 1.6 14.3Z" fill="#fbfbfb" stroke="#4a4a4a" stroke-width="1.1"/><path d="M9.3 1.5V4.7H12.5" fill="#fff" stroke="#4a4a4a" stroke-width="1.1"/><circle cx="11.5" cy="12.5" r="3.4" fill="url(#rb7)" stroke="#0a4aa0" stroke-width="0.8"/></svg><div class="t" style="left:48px;top:602px;font-size:11px;color:#000;line-height:13px;">44112452</div><div class="t" style="left:142px;top:602px;font-size:11px;color:#000;line-height:13px;width:198px;text-align:right;">2011.05.24 14:06</div><div class="t" style="left:344px;top:602px;font-size:11px;color:#000;line-height:13px;width:88px;text-align:right;">buy</div><div class="t" style="left:436px;top:602px;font-size:11px;color:#000;line-height:13px;width:69px;text-align:right;">4.00</div><div class="t" style="left:509px;top:602px;font-size:11px;color:#000;line-height:13px;width:88px;text-align:right;">eurusd</div><div class="t" style="left:601px;top:602px;font-size:11px;color:#000;line-height:13px;width:89px;text-align:right;">1.40872</div><div class="t" style="left:694px;top:602px;font-size:11px;color:#000;line-height:13px;width:88px;text-align:right;">0.00000</div><div class="t" style="left:786px;top:602px;font-size:11px;color:#000;line-height:13px;width:87px;text-align:right;">0.00000</div><div class="t" style="left:877px;top:602px;font-size:11px;color:#000;line-height:13px;width:198px;text-align:right;">2011.05.24 14:20</div><div class="t" style="left:1079px;top:602px;font-size:11px;color:#000;line-height:13px;width:88px;text-align:right;">1.40951</div><div class="t" style="left:1171px;top:602px;font-size:11px;color:#000;line-height:13px;width:88px;text-align:right;">0.00</div><div class="t" style="left:1263px;top:602px;font-size:11px;color:#000;line-height:13px;width:103px;text-align:right;">316.00</div><div class="r" style="left:24px;top:619px;width:1346px;height:19px;background:#ffffff;"></div><div class="r" style="left:24px;top:638px;width:1346px;height:1px;background:#d0d0d0;"></div><div class="r" style="left:141px;top:619px;width:1px;height:19px;background:#d0d0d0;"></div><div class="r" style="left:343px;top:619px;width:1px;height:19px;background:#d0d0d0;"></div><div class="r" style="left:435px;top:619px;width:1px;height:19px;background:#d0d0d0;"></div><div class="r" style="left:508px;top:619px;width:1px;height:19px;background:#d0d0d0;"></div><div class="r" style="left:600px;top:619px;width:1px;height:19px;background:#d0d0d0;"></div><div class="r" style="left:693px;top:619px;width:1px;height:19px;background:#d0d0d0;"></div><div class="r" style="left:785px;top:619px;width:1px;height:19px;background:#d0d0d0;"></div><div class="r" style="left:876px;top:619px;width:1px;height:19px;background:#d0d0d0;"></div><div class="r" style="left:1078px;top:619px;width:1px;height:19px;background:#d0d0d0;"></div><div class="r" style="left:1170px;top:619px;width:1px;height:19px;background:#d0d0d0;"></div><div class="r" style="left:1262px;top:619px;width:1px;height:19px;background:#d0d0d0;"></div><svg class="r" style="left:26px;top:620px" width="18" height="18"><defs><radialGradient id="rb8" cx="0.35" cy="0.3" r="0.8"><stop offset="0" stop-color="#bfe6ff"/><stop offset="0.55" stop-color="#1a8af0"/><stop offset="1" stop-color="#1a8af0"/></radialGradient></defs><path d="M1.6 2.2Q1.6 1.5 2.3 1.5H9.3L12.5 4.7V14.3Q12.5 15 11.8 15H2.3Q1.6 15 1.6 14.3Z" fill="#fbfbfb" stroke="#4a4a4a" stroke-width="1.1"/><path d="M9.3 1.5V4.7H12.5" fill="#fff" stroke="#4a4a4a" stroke-width="1.1"/><circle cx="11.5" cy="12.5" r="3.4" fill="url(#rb8)" stroke="#0a4aa0" stroke-width="0.8"/></svg><div class="t" style="left:48px;top:622px;font-size:11px;color:#000;line-height:13px;">44112647</div><div class="t" style="left:142px;top:622px;font-size:11px;color:#000;line-height:13px;width:198px;text-align:right;">2011.05.24 14:15</div><div class="t" style="left:344px;top:622px;font-size:11px;color:#000;line-height:13px;width:88px;text-align:right;">buy</div><div class="t" style="left:436px;top:622px;font-size:11px;color:#000;line-height:13px;width:69px;text-align:right;">1.00</div><div class="t" style="left:509px;top:622px;font-size:11px;color:#000;line-height:13px;width:88px;text-align:right;">eurusd</div><div class="t" style="left:601px;top:622px;font-size:11px;color:#000;line-height:13px;width:89px;text-align:right;">1.40910</div><div class="t" style="left:694px;top:622px;font-size:11px;color:#000;line-height:13px;width:88px;text-align:right;">0.00000</div><div class="t" style="left:786px;top:622px;font-size:11px;color:#000;line-height:13px;width:87px;text-align:right;">0.00000</div><div class="t" style="left:877px;top:622px;font-size:11px;color:#000;line-height:13px;width:198px;text-align:right;">2011.05.24 14:20</div><div class="t" style="left:1079px;top:622px;font-size:11px;color:#000;line-height:13px;width:88px;text-align:right;">1.40937</div><div class="t" style="left:1171px;top:622px;font-size:11px;color:#000;line-height:13px;width:88px;text-align:right;">0.00</div><div class="t" style="left:1263px;top:622px;font-size:11px;color:#000;line-height:13px;width:103px;text-align:right;">27.00</div><div class="r" style="left:24px;top:638px;width:1346px;height:20px;background:#c8c8c8;"></div><svg class="r" style="left:30px;top:643px" width="10" height="10"><circle cx="4.8" cy="5.3" r="3.2" fill="#d8d8d8" stroke="#6f8aa6" stroke-width="1.3"/><path d="M3 6.5L5.5 4" stroke="#fff" stroke-width="1"/></svg><div class="t" style="left:49px;top:642.04px;font-size:11px;line-height:12.29px;color:#000;font-weight:bold;transform:scaleX(0.9748);transform-origin:0 0;">Zisk/Strata: 1 655.00&nbsp; Kredit: 0.00&nbsp; Vklad: 5 000.00&nbsp; Výber: 0.00</div><div class="t" style="left:1263px;top:641px;font-size:11px;color:#000;font-weight:bold;line-height:13px;width:103px;text-align:right;">6 655.00</div><div class="r" style="left:23px;top:691px;width:1348px;height:1px;background:#000;"></div><div class="r" style="left:23px;top:692px;width:1348px;height:18px;background:#eeeeee;"></div><div class="r" style="left:115px;top:691px;width:80px;height:18px;background:#fff;border:1px solid #000;border-top:none;box-sizing:border-box;"></div><div class="t" style="left:35.5px;top:695.04px;font-size:11px;line-height:12.29px;color:#5e6e80;transform:scaleX(0.9726);transform-origin:0 0;">Obchodovanie</div><div class="t" style="left:124px;top:694.04px;font-size:11px;line-height:12.29px;color:#000;transform:scaleX(0.9896);transform-origin:0 0;">História účtu</div><div class="t" style="left:204px;top:695.04px;font-size:11px;line-height:12.29px;color:#5e6e80;transform:scaleX(1.0077);transform-origin:0 0;">Správy</div><div class="t" style="left:258px;top:695.04px;font-size:11px;line-height:12.29px;color:#5e6e80;transform:scaleX(0.9699);transform-origin:0 0;">Upozornenia</div><div class="t" style="left:338.5px;top:695.04px;font-size:11px;line-height:12.29px;color:#5e6e80;transform:scaleX(0.9721);transform-origin:0 0;">Poštová schránka</div><div class="t" style="left:443px;top:695.04px;font-size:11px;line-height:12.29px;color:#5e6e80;transform:scaleX(1.0077);transform-origin:0 0;">Experti</div><div class="t" style="left:497px;top:695.04px;font-size:11px;line-height:12.29px;color:#5e6e80;transform:scaleX(0.9325);transform-origin:0 0;">Denník</div><div class="r" style="left:249px;top:696px;width:1px;height:11px;background:#6d6d6d;"></div><div class="r" style="left:329px;top:696px;width:1px;height:11px;background:#6d6d6d;"></div><div class="r" style="left:434px;top:696px;width:1px;height:11px;background:#6d6d6d;"></div><div class="r" style="left:488px;top:696px;width:1px;height:11px;background:#6d6d6d;"></div><div class="r" style="left:540px;top:696px;width:1px;height:11px;background:#6d6d6d;"></div><div class="t" style="left:10.3px;top:709.5px;font-size:11px;color:#3a4a68;line-height:12.29px;transform-origin:0 0;transform:rotate(-90deg);">Terminál</div><div class="r" style="left:8px;top:714px;width:1366px;height:1px;background:#a0a0a0;"></div><div class="r" style="left:8px;top:715px;width:1366px;height:21px;background:#f0f0f0;"></div><div class="t" style="left:10.4px;top:721.04px;font-size:11px;line-height:12.29px;color:#000;transform:scaleX(1.0114);transform-origin:0 0;">Pre nápovedu stlačte F1</div><div class="r" style="left:648px;top:719px;width:1px;height:16px;background:#a0a0a0;"></div><div class="r" style="left:764px;top:719px;width:1px;height:16px;background:#a0a0a0;"></div><div class="r" style="left:866px;top:719px;width:1px;height:16px;background:#a0a0a0;"></div><div class="r" style="left:937px;top:719px;width:1px;height:16px;background:#a0a0a0;"></div><div class="r" style="left:1008px;top:719px;width:1px;height:16px;background:#a0a0a0;"></div><div class="r" style="left:1076px;top:719px;width:1px;height:16px;background:#a0a0a0;"></div><div class="r" style="left:1146px;top:719px;width:1px;height:16px;background:#a0a0a0;"></div><div class="r" style="left:1212px;top:719px;width:1px;height:16px;background:#a0a0a0;"></div><div class="t" style="left:654px;top:721.04px;font-size:11px;line-height:12.29px;color:#000;transform:scaleX(1.0903);transform-origin:0 0;">Default</div><div class="t" style="left:770px;top:721.04px;font-size:11px;line-height:12.29px;color:#000;transform:scaleX(0.9903);transform-origin:0 0;">2011.05.23 06:00</div><div class="t" style="left:871.5px;top:721.04px;font-size:11px;line-height:12.29px;color:#000;transform:scaleX(1.0013);transform-origin:0 0;">O: 1.40832</div><div class="t" style="left:943px;top:721.04px;font-size:11px;line-height:12.29px;color:#000;transform:scaleX(0.9848);transform-origin:0 0;">H: 1.40877</div><div class="t" style="left:1013.5px;top:721.04px;font-size:11px;line-height:12.29px;color:#000;transform:scaleX(0.9713);transform-origin:0 0;">L: 1.40762</div><div class="t" style="left:1082px;top:721.04px;font-size:11px;line-height:12.29px;color:#000;transform:scaleX(0.9662);transform-origin:0 0;">C: 1.40784</div><div class="t" style="left:1152px;top:721.04px;font-size:11px;line-height:12.29px;color:#000;transform:scaleX(0.9874);transform-origin:0 0;">V: 613</div><div class="t" style="left:1272px;top:721.04px;font-size:11px;line-height:12.29px;color:#000;transform:scaleX(1.0287);transform-origin:0 0;">20944/5 kb</div><div class="r" style="left:0px;top:736px;width:1382px;height:8px;background:linear-gradient(180deg,#25303c 0%,#25303c 12%,#8fb0cc 13%,#7d9bb6 50%,#5d7a94 100%);"></div><div class="r" style="left:0px;top:741px;width:1382px;height:3px;background:linear-gradient(90deg,rgba(60,70,80,0.5) 0%,rgba(60,70,80,0) 30%,rgba(60,70,80,0) 100%);"></div><div class="r" style="left:316px;top:737px;width:58px;height:7px;background:linear-gradient(180deg,#f4f6f8 0%,#d8e0e8 60%,#b8c6d4 100%);border-radius:2px 2px 0 0;box-shadow:0 -1px 0 #20283a;"></div><div class="r" style="left:377px;top:737px;width:59px;height:7px;background:linear-gradient(180deg,#f4f6f8 0%,#d8e0e8 60%,#b8c6d4 100%);border-radius:2px 2px 0 0;box-shadow:0 -1px 0 #20283a;"></div><div class="r" style="left:439px;top:737px;width:59px;height:7px;background:linear-gradient(180deg,#f4f6f8 0%,#d8e0e8 60%,#b8c6d4 100%);border-radius:2px 2px 0 0;box-shadow:0 -1px 0 #20283a;"></div><div class="r" style="left:331px;top:739px;width:21px;height:5px;background:#58c0f8;border-radius:10px 10px 0 0;"></div><div class="r" style="left:391px;top:739px;width:32px;height:5px;background:#ffffff;"></div><div class="r" style="left:460px;top:739px;width:16px;height:5px;background:#e89030;border-radius:8px 8px 0 0;"></div><div class="r" style="left:20px;top:738px;width:28px;height:28px;background:radial-gradient(circle at 50% 35%,#f0f6fc 0%,#b8cce0 45%,#7a9cc0 80%);border-radius:50%;border:1.5px solid #23448e;box-sizing:border-box;"></div><div class="r" style="left:100px;top:740px;width:13px;height:10px;background:#7a8a9a;border-radius:7px 7px 0 0;border:1.5px solid #e08a20;box-sizing:border-box;background:transparent;"></div><div class="r" style="left:145px;top:741px;width:15px;height:3px;background:#d8b060;"></div><div class="r" style="left:1360px;top:737px;width:14px;height:7px;background:rgba(200,215,230,0.5);border:1px solid #b8c8d8;box-sizing:border-box;"></div><svg class="r" style="left:0;top:0" width="1382" height="744"><rect x="1218" y="721" width="2" height="8.5" fill="#4a7000"/><rect x="1218" y="731.0" width="2" height="2.0" fill="#900000"/><rect x="1221" y="721" width="2" height="7.5" fill="#4a7000"/><rect x="1221" y="730.0" width="2" height="3.0" fill="#900000"/><rect x="1224" y="721" width="2" height="6.4" fill="#4a7000"/><rect x="1224" y="728.9" width="2" height="4.1" fill="#900000"/><rect x="1227" y="721" width="2" height="5.4" fill="#4a7000"/><rect x="1227" y="727.9" width="2" height="5.1" fill="#900000"/><rect x="1230" y="721" width="2" height="4.3" fill="#4a7000"/><rect x="1230" y="726.8" width="2" height="6.2" fill="#900000"/><rect x="1233" y="721" width="2" height="3.2" fill="#4a7000"/><rect x="1233" y="725.8" width="2" height="7.2" fill="#900000"/><rect x="1236" y="721" width="2" height="2.2" fill="#4a7000"/><rect x="1236" y="724.7" width="2" height="8.3" fill="#900000"/><rect x="1239" y="721" width="2" height="1.1" fill="#4a7000"/><rect x="1239" y="723.6" width="2" height="9.4" fill="#900000"/><path d="M1360 736L1374 722M1364 736L1374 726M1368 736L1374 730" stroke="#a0a0a0" stroke-width="1.2"/><path d="M1361.5 736L1374 723.5M1365.5 736L1374 727.5M1369.5 736L1374 731.5" stroke="#ffffff" stroke-width="1"/><path d="M1349 416v6l-3-3z" fill="#a0a0a0"/><path d="M1363 416v6l3-3z" fill="#a0a0a0"/></svg><div class="r" style="left:0px;top:0px;width:8px;height:744px;background:#000;"></div><div class="r" style="left:0px;top:0px;width:1382px;height:8px;background:#000;"></div><div class="r" style="left:1374px;top:0px;width:8px;height:744px;background:#000;"></div>
</body></html>
